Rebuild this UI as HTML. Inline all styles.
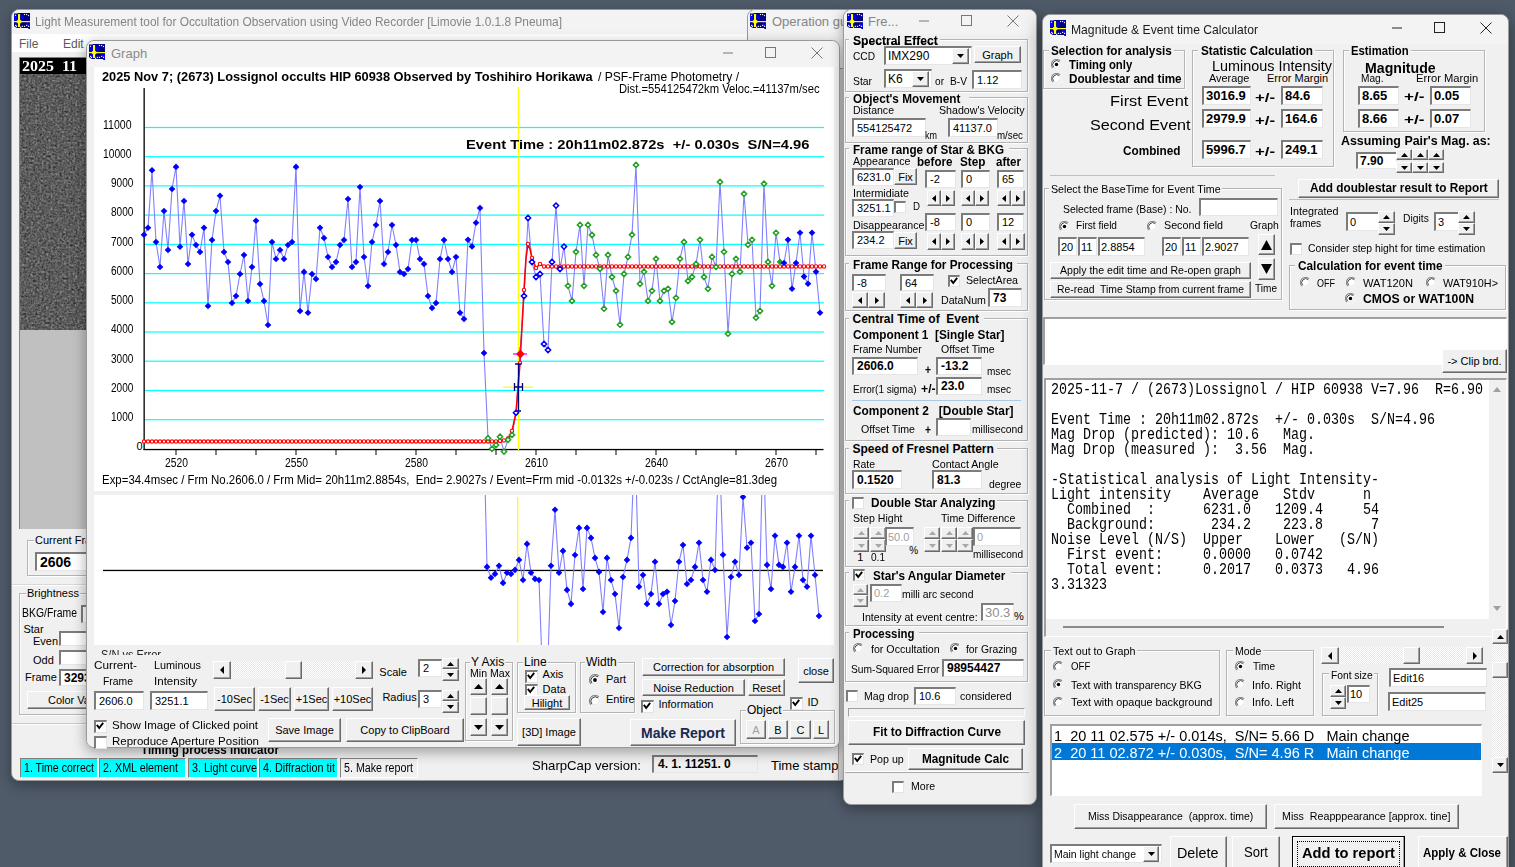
<!DOCTYPE html><html><head><meta charset="utf-8"><style>
*{margin:0;padding:0;box-sizing:content-box}
html,body{width:1515px;height:867px;overflow:hidden}
body{position:relative;background:#505b6a;font-family:"Liberation Sans",sans-serif;font-size:12px;color:#000}
.a{position:absolute}
.t{position:absolute;white-space:pre}
.win{position:absolute;background:#f0f0f0;border:1px solid #9a9a9a;border-radius:8px 8px 0 0;box-shadow:0 4px 14px rgba(0,0,0,0.35)}
.btn{position:absolute;background:#f0f0f0;border-style:solid;border-width:1px 1px 1px 1px;border-color:#fff #6a6a6a #6a6a6a #fff;box-shadow:inset -1px -1px 0 #a0a0a0;display:flex;align-items:center;justify-content:center;white-space:pre;overflow:hidden}
.ed{position:absolute;background:#fff;border-style:solid;border-width:2px 1px 1px 2px;border-color:#7c7c7c #e6e6e6 #e6e6e6 #7c7c7c;white-space:pre;overflow:hidden}
.btn svg{display:block}
.grp{position:absolute;border:1px solid #b4b4b4;box-shadow:inset 1px 1px 0 #fff, 1px 1px 0 #fff}
.glab{background:#f0f0f0;padding:0 1px}
.chk{position:absolute;background:#fff;border-style:solid;border-width:2px 1px 1px 2px;border-color:#7c7c7c #e3e3e3 #e3e3e3 #7c7c7c}
</style></head><body>
<div class="win" style="left:11px;top:9px;width:834px;height:770px;border-radius:8px"></div>
<div class="a" style="left:12px;top:10px;width:834px;height:25px;background:#f3f3f3;border-radius:8px 8px 0 0"></div>
<svg class="a" style="left:14px;top:13px" width="16" height="16" viewBox="0 0 16 16"><path d="M0 0.5 H3.5 L4 0 H16 V16 H14.5 L14 15 H3 L1 14 L0 13 Z" fill="#000080"/><path d="M0 2 L3 1.5 L3.5 6 L1 8 L0 7Z M7 2 L10 3 L9 7 L7 6Z M12 10 L16 9.5 L16 16 L14 13Z M1 10 L3 10 L4 13 L1 13Z" fill="#0000ff"/><rect x="4" y="1" width="2.1" height="13" fill="#ffff00"/><rect x="0" y="8" width="16" height="1.2" fill="#ffff00"/><path d="M5 5.9 L8.5 8.6 L5 11.6 L1.9 8.6Z" fill="#ffff00"/><rect x="0.9" y="1.6999999999999997" width="1.2" height="1.2" fill="#e8e8ff"/><rect x="9.9" y="0.9" width="1.2" height="1.2" fill="#e8e8ff"/><rect x="12.0" y="0.9" width="1.2" height="1.2" fill="#e8e8ff"/><rect x="13.9" y="1.9" width="1.2" height="1.2" fill="#e8e8ff"/><rect x="1.0" y="11.9" width="1.2" height="1.2" fill="#e8e8ff"/><rect x="1.9" y="12.8" width="1.2" height="1.2" fill="#e8e8ff"/><rect x="6.0" y="13.700000000000001" width="1.2" height="1.2" fill="#e8e8ff"/><rect x="7.800000000000001" y="12.8" width="1.2" height="1.2" fill="#e8e8ff"/><rect x="9.9" y="12.8" width="1.2" height="1.2" fill="#e8e8ff"/><rect x="12.0" y="11.8" width="1.2" height="1.2" fill="#e8e8ff"/><rect x="13.9" y="12.8" width="1.2" height="1.2" fill="#e8e8ff"/></svg>
<div class="t" style="left:35px;top:15.26px;font-size:13px;line-height:13px;color:#858585;transform:scaleX(0.9142);transform-origin:0 0;">Light Measurement tool for Occultation Observation using Video Recorder [Limovie 1.0.1.8 Pneuma]</div>
<div class="a" style="left:12px;top:34px;width:834px;height:18px;background:#ffffff;"></div>
<div class="t" style="left:19px;top:37.74px;font-size:12px;line-height:12px;color:#5a5a5a;">File</div>
<div class="t" style="left:63px;top:37.74px;font-size:12px;line-height:12px;color:#5a5a5a;">Edit</div>
<div class="a" style="left:19px;top:57px;width:68px;height:471px;background:#c0c0c0;border-left:1px solid #808080;border-top:1px solid #808080"></div>
<svg class="a" style="left:20px;top:58px" width="67" height="272"><filter id="nz" x="0" y="0" width="100%" height="100%" color-interpolation-filters="sRGB"><feTurbulence type="fractalNoise" baseFrequency="0.45" numOctaves="3" seed="3"/><feColorMatrix type="matrix" values="0.33 0.33 0.33 0 0  0.33 0.33 0.33 0 0  0.33 0.33 0.33 0 0  0 0 0 0 1"/><feComponentTransfer><feFuncR type="linear" slope="0.85" intercept="-0.06"/><feFuncG type="linear" slope="0.85" intercept="-0.06"/><feFuncB type="linear" slope="0.85" intercept="-0.06"/></feComponentTransfer></filter><rect width="67" height="272" filter="url(#nz)"/></svg>
<div class="a" style="left:20px;top:58px;width:67px;height:16px;background:#000;"></div>
<div class="t" style="left:22px;top:58.8px;font-size:15px;line-height:15px;font-weight:bold;color:#fff;font-family:'Liberation Serif', serif;transform:scaleX(1.0644);transform-origin:0 0;">2025  11</div>
<div class="grp" style="left:27px;top:540px;width:68px;height:34px;"></div>
<div class="t glab" style="left:34px;top:534px;font-size:11px;line-height:13px;">Current Fra</div>
<div class="ed" style="left:35px;top:552px;width:56px;height:16px;background:#fff;font-size:14px;line-height:16px;padding-left:3px;font-weight:bold;">2606</div>
<div class="a" style="left:12px;top:584px;width:80px;height:1px;background:#d8d8d8;border-bottom:1px solid #fff"></div>
<div class="grp" style="left:19px;top:593px;width:78px;height:120px;"></div>
<div class="t glab" style="left:26px;top:587px;font-size:11px;line-height:13px;">Brightness</div>
<div class="t" style="left:21.5px;top:606.84px;font-size:12px;line-height:12px;transform:scaleX(0.8683);transform-origin:0 0;">BKG/Frame</div>
<div class="ed" style="left:81px;top:605px;width:16px;height:15px;background:#fff;font-size:12px;line-height:15px;padding-left:3px;"></div>
<div class="t" style="left:23.4px;top:623.92px;font-size:11px;line-height:11px;">Star</div>
<div class="t" style="left:33px;top:636.22px;font-size:11px;line-height:11px;">Even</div>
<div class="ed" style="left:59px;top:631px;width:36px;height:12px;background:#fff;font-size:12px;line-height:12px;padding-left:3px;"></div>
<div class="t" style="left:33px;top:654.72px;font-size:11px;line-height:11px;">Odd</div>
<div class="ed" style="left:59px;top:650px;width:36px;height:12px;background:#fff;font-size:12px;line-height:12px;padding-left:3px;"></div>
<div class="t" style="left:25px;top:672.42px;font-size:11px;line-height:11px;">Frame</div>
<div class="ed" style="left:59px;top:669px;width:36px;height:14px;background:#fff;font-size:12px;line-height:14px;padding-left:3px;font-weight:bold;">3293</div>
<div class="btn" style="left:27px;top:691px;width:68px;height:16px;justify-content:flex-start;padding-left:20px;width:50px"><span style="font-size:11px;">Color Va</span></div>
<div class="a" style="left:12px;top:723px;width:834px;height:1px;background:#c8c8c8;border-bottom:1px solid #fff"></div>
<div class="t" style="left:141px;top:743.26px;font-size:13px;line-height:13px;font-weight:bold;transform:scaleX(0.8940);transform-origin:0 0;">Timing process indicator</div>
<div class="a" style="left:20px;top:758px;width:76px;height:18px;background:#00ffff;border-top:1px solid #808080;border-left:1px solid #808080;border-bottom:1px solid #fff;border-right:1px solid #fff;overflow:hidden"></div>
<div class="t" style="left:23.5px;top:762.24px;font-size:12px;line-height:12px;transform:scaleX(0.8821);transform-origin:0 0;">1. Time correct</div>
<div class="a" style="left:99px;top:758px;width:85px;height:18px;background:#00ffff;border-top:1px solid #808080;border-left:1px solid #808080;border-bottom:1px solid #fff;border-right:1px solid #fff;overflow:hidden"></div>
<div class="t" style="left:102.5px;top:762.24px;font-size:12px;line-height:12px;transform:scaleX(0.8972);transform-origin:0 0;">2. XML element</div>
<div class="a" style="left:188px;top:758px;width:68px;height:18px;background:#00ffff;border-top:1px solid #808080;border-left:1px solid #808080;border-bottom:1px solid #fff;border-right:1px solid #fff;overflow:hidden"></div>
<div class="t" style="left:191.5px;top:762.24px;font-size:12px;line-height:12px;transform:scaleX(0.9023);transform-origin:0 0;">3. Light curve</div>
<div class="a" style="left:259px;top:758px;width:77px;height:18px;background:#00ffff;border-top:1px solid #808080;border-left:1px solid #808080;border-bottom:1px solid #fff;border-right:1px solid #fff;overflow:hidden"></div>
<div class="t" style="left:262.5px;top:762.24px;font-size:12px;line-height:12px;transform:scaleX(0.9021);transform-origin:0 0;">4. Diffraction tit</div>
<div class="a" style="left:340px;top:758px;width:76px;height:18px;background:#f0f0f0;border-top:1px solid #808080;border-left:1px solid #808080;border-bottom:1px solid #fff;border-right:1px solid #fff;overflow:hidden"></div>
<div class="t" style="left:343.5px;top:762.24px;font-size:12px;line-height:12px;transform:scaleX(0.8919);transform-origin:0 0;">5. Make report</div>
<div class="t" style="left:531.5px;top:758.66px;font-size:13px;line-height:13px;transform:scaleX(1.0123);transform-origin:0 0;">SharpCap version:</div>
<div class="ed" style="left:652px;top:755px;width:99px;height:15px;background:#f0f0f0;font-size:12px;line-height:15px;padding-left:4px;font-weight:bold;">4. 1. 11251. 0</div>
<div class="t" style="left:771px;top:758.76px;font-size:13px;line-height:13px;">Time stamp</div>
<div class="a" style="left:838px;top:40px;width:6px;height:740px;background:#d9d9d9;border-left:1px solid #a8a8a8"></div>
<div class="win" style="left:747px;top:9px;width:108px;height:58px;box-shadow:none"></div>
<div class="a" style="left:748px;top:10px;width:108px;height:30px;background:#f3f3f3;border-radius:8px 8px 0 0"></div>
<svg class="a" style="left:750px;top:13px" width="16" height="16" viewBox="0 0 16 16"><path d="M0 0.5 H3.5 L4 0 H16 V16 H14.5 L14 15 H3 L1 14 L0 13 Z" fill="#000080"/><path d="M0 2 L3 1.5 L3.5 6 L1 8 L0 7Z M7 2 L10 3 L9 7 L7 6Z M12 10 L16 9.5 L16 16 L14 13Z M1 10 L3 10 L4 13 L1 13Z" fill="#0000ff"/><rect x="4" y="1" width="2.1" height="13" fill="#ffff00"/><rect x="0" y="8" width="16" height="1.2" fill="#ffff00"/><path d="M5 5.9 L8.5 8.6 L5 11.6 L1.9 8.6Z" fill="#ffff00"/><rect x="0.9" y="1.6999999999999997" width="1.2" height="1.2" fill="#e8e8ff"/><rect x="9.9" y="0.9" width="1.2" height="1.2" fill="#e8e8ff"/><rect x="12.0" y="0.9" width="1.2" height="1.2" fill="#e8e8ff"/><rect x="13.9" y="1.9" width="1.2" height="1.2" fill="#e8e8ff"/><rect x="1.0" y="11.9" width="1.2" height="1.2" fill="#e8e8ff"/><rect x="1.9" y="12.8" width="1.2" height="1.2" fill="#e8e8ff"/><rect x="6.0" y="13.700000000000001" width="1.2" height="1.2" fill="#e8e8ff"/><rect x="7.800000000000001" y="12.8" width="1.2" height="1.2" fill="#e8e8ff"/><rect x="9.9" y="12.8" width="1.2" height="1.2" fill="#e8e8ff"/><rect x="12.0" y="11.8" width="1.2" height="1.2" fill="#e8e8ff"/><rect x="13.9" y="12.8" width="1.2" height="1.2" fill="#e8e8ff"/></svg>
<div class="t" style="left:772px;top:15.26px;font-size:13px;line-height:13px;color:#858585;">Operation gui</div>
<div class="win" style="left:86px;top:40px;width:752px;height:706px;border-radius:8px"></div>
<div class="a" style="left:87px;top:41px;width:752px;height:26px;background:#f3f3f3;border-radius:8px 8px 0 0"></div>
<svg class="a" style="left:89px;top:44px" width="16" height="16" viewBox="0 0 16 16"><path d="M0 0.5 H3.5 L4 0 H16 V16 H14.5 L14 15 H3 L1 14 L0 13 Z" fill="#000080"/><path d="M0 2 L3 1.5 L3.5 6 L1 8 L0 7Z M7 2 L10 3 L9 7 L7 6Z M12 10 L16 9.5 L16 16 L14 13Z M1 10 L3 10 L4 13 L1 13Z" fill="#0000ff"/><rect x="4" y="1" width="2.1" height="13" fill="#ffff00"/><rect x="0" y="8" width="16" height="1.2" fill="#ffff00"/><path d="M5 5.9 L8.5 8.6 L5 11.6 L1.9 8.6Z" fill="#ffff00"/><rect x="0.9" y="1.6999999999999997" width="1.2" height="1.2" fill="#e8e8ff"/><rect x="9.9" y="0.9" width="1.2" height="1.2" fill="#e8e8ff"/><rect x="12.0" y="0.9" width="1.2" height="1.2" fill="#e8e8ff"/><rect x="13.9" y="1.9" width="1.2" height="1.2" fill="#e8e8ff"/><rect x="1.0" y="11.9" width="1.2" height="1.2" fill="#e8e8ff"/><rect x="1.9" y="12.8" width="1.2" height="1.2" fill="#e8e8ff"/><rect x="6.0" y="13.700000000000001" width="1.2" height="1.2" fill="#e8e8ff"/><rect x="7.800000000000001" y="12.8" width="1.2" height="1.2" fill="#e8e8ff"/><rect x="9.9" y="12.8" width="1.2" height="1.2" fill="#e8e8ff"/><rect x="12.0" y="11.8" width="1.2" height="1.2" fill="#e8e8ff"/><rect x="13.9" y="12.8" width="1.2" height="1.2" fill="#e8e8ff"/></svg>
<div class="t" style="left:111px;top:46.76px;font-size:13px;line-height:13px;color:#8a8a8a;">Graph</div>
<svg class="a" style="left:717px;top:45px" width="110" height="16" viewBox="0 0 110 16"><path d="M6 8 H16" stroke="#777" stroke-width="1"/><rect x="48.5" y="2.5" width="10" height="10" fill="none" stroke="#777" stroke-width="1"/><path d="M94.5 2.5 L105.5 13.5 M105.5 2.5 L94.5 13.5" stroke="#777" stroke-width="1"/></svg>
<div class="a" style="left:94px;top:67px;width:740px;height:424px;background:#fff;"></div>
<div class="a" style="left:94px;top:495px;width:740px;height:150px;background:#fff;"></div>
<svg class="a" style="left:0;top:0" width="1515" height="867" viewBox="0 0 1515 867">
<defs><clipPath id="cu"><rect x="94" y="67" width="740" height="424"/></clipPath><clipPath id="cl"><rect x="94" y="495" width="740" height="150"/></clipPath></defs>
<rect x="145" y="419.1" width="679" height="1.2" fill="#00ffff"/>
<rect x="145" y="389.9" width="679" height="1.2" fill="#00ffff"/>
<rect x="145" y="360.6" width="679" height="1.2" fill="#00ffff"/>
<rect x="145" y="331.4" width="679" height="1.2" fill="#00ffff"/>
<rect x="145" y="302.2" width="679" height="1.2" fill="#00ffff"/>
<rect x="145" y="273.0" width="679" height="1.2" fill="#00ffff"/>
<rect x="145" y="243.8" width="679" height="1.2" fill="#00ffff"/>
<rect x="145" y="214.5" width="679" height="1.2" fill="#00ffff"/>
<rect x="145" y="185.3" width="679" height="1.2" fill="#00ffff"/>
<rect x="145" y="156.1" width="679" height="1.2" fill="#00ffff"/>
<rect x="145" y="126.9" width="679" height="1.2" fill="#00ffff"/>
<rect x="143.5" y="88" width="1.3" height="362" fill="#000"/>
<rect x="143.5" y="448.9" width="680" height="1.3" fill="#000"/>
<rect x="175.5" y="449" width="1" height="6" fill="#000"/>
<rect x="215.5" y="449" width="1" height="6" fill="#000"/>
<rect x="255.5" y="449" width="1" height="6" fill="#000"/>
<rect x="295.5" y="449" width="1" height="6" fill="#000"/>
<rect x="335.5" y="449" width="1" height="6" fill="#000"/>
<rect x="375.5" y="449" width="1" height="6" fill="#000"/>
<rect x="415.5" y="449" width="1" height="6" fill="#000"/>
<rect x="455.5" y="449" width="1" height="6" fill="#000"/>
<rect x="495.5" y="449" width="1" height="6" fill="#000"/>
<rect x="535.5" y="449" width="1" height="6" fill="#000"/>
<rect x="575.5" y="449" width="1" height="6" fill="#000"/>
<rect x="615.5" y="449" width="1" height="6" fill="#000"/>
<rect x="655.5" y="449" width="1" height="6" fill="#000"/>
<rect x="695.5" y="449" width="1" height="6" fill="#000"/>
<rect x="735.5" y="449" width="1" height="6" fill="#000"/>
<rect x="775.5" y="449" width="1" height="6" fill="#000"/>
<rect x="815.5" y="449" width="1" height="6" fill="#000"/>
<rect x="517.8" y="87" width="1.3" height="363" fill="#ffff00"/>
<polyline points="144,234.8 148,227.8 152,170.2 156,242 160,267 164,211 168,250 172,189 176,166.9 180,246.7 184,201 188,264 192,234.8 196,245 200,252 204,227.8 208,306 212,240 216,211 220,195.8 224,252 228,262 232,303 236,296 240,274 244,255 248,301 252,267 256,220.8 260,284 264,301 268,325 272,242 276,259 280,250 284,259 288,245 292,242 296,166.9 300,311 304,271.9 308,312.8 312,274 316,279 320,227.8 324,238 328,257 332,267 336,262 340,245 344,240 348,199 352,267 356,262 360,187 364,257 368,286 372,242 376,225 380,201 384,264 388,252 392,225 396,245 400,272 404,274 408,269 412,240 416,240 420,259 424,264 428,296 432,308 436,303 440,259 444,240 448,259 452,272 456,257 460,312.7 464,319 468,239.8 472,246.4 476,222.7 480,208 484,353 488,438.2 492,448.8 496,445 500,436.7 504,451.6 508,439.8 512,434.9 516,412.8 520,354 524,296 528,218 532,262 536,277 540,274 544,344 548,350 552,262 556,205.6 560,269 564,246.6 568,285.8 572,300.9 576,251.8 580,224.9 584,285.8 588,224.9 592,235 596,254.9 600,268.9 604,308.7 608,254.9 612,277 616,290.8 620,324.7 624,274 628,256.9 632,234.7 636,164.9 640,283.8 644,271.7 648,300.9 652,290.8 656,258.8 660,300.9 664,290.8 668,288.8 672,321.9 676,297.8 680,258.8 684,242 688,281 692,277 696,263.9 700,239.8 704,277 708,288.8 712,256.9 716,266.9 720,182 724,251.8 728,333.7 732,274 736,258.8 740,271.7 744,193.8 748,244.8 752,239.8 756,317.7 760,311 764,183.7 768,261.9 772,285.8 776,232.8 780,261.9 784,263 788,239.8 792,288.8 796,263 800,232.8 804,276.6 808,283.8 812,232.8 816,271.7 820,312.7" fill="none" stroke="#8080ff" stroke-width="1.1" clip-path="url(#cu)"/>
<g clip-path="url(#cu)"><polyline points="144,441.6 145,441.6 146,441.6 147,441.6 148,441.6 149,441.6 150,441.6 151,441.6 152,441.6 153,441.6 154,441.6 155,441.6 156,441.6 157,441.6 158,441.6 159,441.6 160,441.6 161,441.6 162,441.6 163,441.6 164,441.6 165,441.6 166,441.6 167,441.6 168,441.6 169,441.6 170,441.6 171,441.6 172,441.6 173,441.6 174,441.6 175,441.6 176,441.6 177,441.6 178,441.6 179,441.6 180,441.6 181,441.6 182,441.6 183,441.6 184,441.6 185,441.6 186,441.6 187,441.6 188,441.6 189,441.6 190,441.6 191,441.6 192,441.6 193,441.6 194,441.6 195,441.6 196,441.6 197,441.6 198,441.6 199,441.6 200,441.6 201,441.6 202,441.6 203,441.6 204,441.6 205,441.6 206,441.6 207,441.6 208,441.6 209,441.6 210,441.6 211,441.6 212,441.6 213,441.6 214,441.6 215,441.6 216,441.6 217,441.6 218,441.6 219,441.6 220,441.6 221,441.6 222,441.6 223,441.6 224,441.6 225,441.6 226,441.6 227,441.6 228,441.6 229,441.6 230,441.6 231,441.6 232,441.6 233,441.5 234,441.5 235,441.5 236,441.5 237,441.5 238,441.5 239,441.5 240,441.5 241,441.5 242,441.5 243,441.5 244,441.5 245,441.5 246,441.5 247,441.5 248,441.5 249,441.5 250,441.5 251,441.5 252,441.5 253,441.5 254,441.5 255,441.5 256,441.5 257,441.5 258,441.5 259,441.5 260,441.5 261,441.5 262,441.5 263,441.5 264,441.5 265,441.5 266,441.5 267,441.5 268,441.5 269,441.5 270,441.5 271,441.5 272,441.5 273,441.5 274,441.5 275,441.5 276,441.5 277,441.5 278,441.5 279,441.5 280,441.5 281,441.5 282,441.5 283,441.5 284,441.5 285,441.5 286,441.5 287,441.5 288,441.5 289,441.5 290,441.5 291,441.5 292,441.5 293,441.5 294,441.5 295,441.5 296,441.5 297,441.5 298,441.5 299,441.5 300,441.5 301,441.5 302,441.5 303,441.5 304,441.5 305,441.5 306,441.5 307,441.5 308,441.5 309,441.5 310,441.5 311,441.5 312,441.5 313,441.5 314,441.5 315,441.5 316,441.5 317,441.5 318,441.5 319,441.5 320,441.5 321,441.5 322,441.5 323,441.5 324,441.5 325,441.5 326,441.5 327,441.5 328,441.5 329,441.5 330,441.5 331,441.5 332,441.5 333,441.5 334,441.5 335,441.5 336,441.5 337,441.5 338,441.5 339,441.5 340,441.5 341,441.5 342,441.5 343,441.5 344,441.5 345,441.5 346,441.5 347,441.5 348,441.5 349,441.5 350,441.5 351,441.5 352,441.5 353,441.5 354,441.5 355,441.5 356,441.5 357,441.5 358,441.5 359,441.5 360,441.5 361,441.5 362,441.5 363,441.5 364,441.5 365,441.5 366,441.5 367,441.5 368,441.5 369,441.5 370,441.5 371,441.5 372,441.5 373,441.5 374,441.5 375,441.5 376,441.5 377,441.5 378,441.5 379,441.5 380,441.5 381,441.5 382,441.5 383,441.5 384,441.5 385,441.5 386,441.5 387,441.5 388,441.5 389,441.5 390,441.5 391,441.5 392,441.5 393,441.5 394,441.5 395,441.5 396,441.5 397,441.5 398,441.5 399,441.5 400,441.5 401,441.5 402,441.5 403,441.5 404,441.5 405,441.5 406,441.5 407,441.5 408,441.4 409,441.4 410,441.4 411,441.4 412,441.4 413,441.4 414,441.4 415,441.4 416,441.4 417,441.4 418,441.4 419,441.4 420,441.4 421,441.4 422,441.4 423,441.4 424,441.4 425,441.4 426,441.4 427,441.4 428,441.4 429,441.4 430,441.4 431,441.4 432,441.4 433,441.4 434,441.4 435,441.4 436,441.4 437,441.4 438,441.4 439,441.4 440,441.4 441,441.4 442,441.4 443,441.4 444,441.4 445,441.4 446,441.4 447,441.4 448,441.4 449,441.4 450,441.4 451,441.4 452,441.4 453,441.4 454,441.4 455,441.4 456,441.4 457,441.4 458,441.4 459,441.4 460,441.4 461,441.4 462,441.4 463,441.4 464,441.4 465,441.4 466,441.4 467,441.4 468,441.4 469,441.4 470,441.4 471,441.4 472,441.4 473,441.4 474,441.4 475,441.4 476,441.4 477,441.4 478,441.4 479,441.4 480,441.4 481,441.4 482,441.4 483,441.4 484,441.4 485,441.4 486,441.4 487,441.4 488,441.4 489,441.4 490,441.4 491,441.4 492,441.4 493,441.4 494,441.4 495,441.4 496,441.4 497,441.3 498,441.2 499,441.1 500,440.9 501,440.8 502,440.7 503,440.6 504,440.5 505,440.0 506,439.5 507,439.0 508,438.5 509,436.6 510,434.8 511,432.9 512,431.0 513,426.5 514,422.0 515,417.5 516,413.0 517,400.5 518,388.0 519,375.5 520,363.0 521,344.8 522,326.5 523,308.2 524,290.0 525,274.0 526,258.0 527,251.0 528,244.0 529,246.5 530,249.0 531,253.5 532,258.0 533,260.5 534,263.0 535,265.5 536,268.0 537,267.0 538,266.0 539,265.0 540,264.0 541,264.6 542,265.2 543,265.9 544,266.5 545,266.5 546,266.5 547,266.5 548,266.5 549,266.5 550,266.5 551,266.5 552,266.5 553,266.5 554,266.5 555,266.5 556,266.5 557,266.5 558,266.5 559,266.5 560,266.5 561,266.5 562,266.5 563,266.5 564,266.5 565,266.5 566,266.5 567,266.5 568,266.5 569,266.5 570,266.5 571,266.5 572,266.5 573,266.5 574,266.5 575,266.5 576,266.5 577,266.5 578,266.5 579,266.5 580,266.5 581,266.5 582,266.5 583,266.5 584,266.5 585,266.5 586,266.5 587,266.5 588,266.5 589,266.5 590,266.5 591,266.5 592,266.5 593,266.5 594,266.5 595,266.5 596,266.5 597,266.5 598,266.5 599,266.5 600,266.5 601,266.5 602,266.5 603,266.5 604,266.5 605,266.5 606,266.5 607,266.5 608,266.5 609,266.5 610,266.5 611,266.5 612,266.5 613,266.5 614,266.5 615,266.5 616,266.5 617,266.5 618,266.5 619,266.5 620,266.5 621,266.5 622,266.5 623,266.5 624,266.5 625,266.5 626,266.5 627,266.5 628,266.5 629,266.5 630,266.5 631,266.5 632,266.5 633,266.5 634,266.5 635,266.5 636,266.5 637,266.5 638,266.5 639,266.5 640,266.5 641,266.5 642,266.5 643,266.5 644,266.5 645,266.5 646,266.5 647,266.5 648,266.5 649,266.5 650,266.5 651,266.5 652,266.5 653,266.5 654,266.5 655,266.5 656,266.5 657,266.5 658,266.5 659,266.5 660,266.5 661,266.5 662,266.5 663,266.5 664,266.5 665,266.5 666,266.5 667,266.5 668,266.5 669,266.5 670,266.5 671,266.5 672,266.5 673,266.5 674,266.5 675,266.5 676,266.5 677,266.5 678,266.5 679,266.5 680,266.5 681,266.5 682,266.5 683,266.5 684,266.5 685,266.5 686,266.5 687,266.5 688,266.5 689,266.5 690,266.5 691,266.5 692,266.5 693,266.5 694,266.5 695,266.5 696,266.5 697,266.5 698,266.5 699,266.5 700,266.5 701,266.5 702,266.5 703,266.5 704,266.5 705,266.5 706,266.5 707,266.5 708,266.5 709,266.5 710,266.5 711,266.5 712,266.5 713,266.5 714,266.5 715,266.5 716,266.5 717,266.5 718,266.5 719,266.5 720,266.5 721,266.5 722,266.5 723,266.5 724,266.5 725,266.5 726,266.5 727,266.5 728,266.5 729,266.5 730,266.5 731,266.5 732,266.5 733,266.5 734,266.5 735,266.5 736,266.5 737,266.5 738,266.5 739,266.5 740,266.5 741,266.5 742,266.5 743,266.5 744,266.5 745,266.5 746,266.5 747,266.5 748,266.5 749,266.5 750,266.5 751,266.5 752,266.5 753,266.5 754,266.5 755,266.5 756,266.5 757,266.5 758,266.5 759,266.5 760,266.5 761,266.5 762,266.5 763,266.5 764,266.5 765,266.5 766,266.5 767,266.5 768,266.5 769,266.5 770,266.5 771,266.5 772,266.5 773,266.5 774,266.5 775,266.5 776,266.5 777,266.5 778,266.5 779,266.5 780,266.5 781,266.5 782,266.5 783,266.5 784,266.5 785,266.5 786,266.5 787,266.5 788,266.5 789,266.5 790,266.5 791,266.5 792,266.5 793,266.5 794,266.5 795,266.5 796,266.5 797,266.5 798,266.5 799,266.5 800,266.5 801,266.5 802,266.5 803,266.5 804,266.5 805,266.5 806,266.5 807,266.5 808,266.5 809,266.5 810,266.5 811,266.5 812,266.5 813,266.5 814,266.5 815,266.5 816,266.5 817,266.5 818,266.5 819,266.5 820,266.5 821,266.5 822,266.5 823,266.5 824,266.5" fill="none" stroke="#ff0000" stroke-width="1.6"/>
<circle cx="144" cy="441.6" r="1.7" fill="#fff" stroke="#ff0000" stroke-width="1.1"/>
<circle cx="148" cy="441.6" r="1.7" fill="#fff" stroke="#ff0000" stroke-width="1.1"/>
<circle cx="152" cy="441.6" r="1.7" fill="#fff" stroke="#ff0000" stroke-width="1.1"/>
<circle cx="156" cy="441.6" r="1.7" fill="#fff" stroke="#ff0000" stroke-width="1.1"/>
<circle cx="160" cy="441.6" r="1.7" fill="#fff" stroke="#ff0000" stroke-width="1.1"/>
<circle cx="164" cy="441.6" r="1.7" fill="#fff" stroke="#ff0000" stroke-width="1.1"/>
<circle cx="168" cy="441.6" r="1.7" fill="#fff" stroke="#ff0000" stroke-width="1.1"/>
<circle cx="172" cy="441.6" r="1.7" fill="#fff" stroke="#ff0000" stroke-width="1.1"/>
<circle cx="176" cy="441.6" r="1.7" fill="#fff" stroke="#ff0000" stroke-width="1.1"/>
<circle cx="180" cy="441.6" r="1.7" fill="#fff" stroke="#ff0000" stroke-width="1.1"/>
<circle cx="184" cy="441.6" r="1.7" fill="#fff" stroke="#ff0000" stroke-width="1.1"/>
<circle cx="188" cy="441.6" r="1.7" fill="#fff" stroke="#ff0000" stroke-width="1.1"/>
<circle cx="192" cy="441.6" r="1.7" fill="#fff" stroke="#ff0000" stroke-width="1.1"/>
<circle cx="196" cy="441.6" r="1.7" fill="#fff" stroke="#ff0000" stroke-width="1.1"/>
<circle cx="200" cy="441.6" r="1.7" fill="#fff" stroke="#ff0000" stroke-width="1.1"/>
<circle cx="204" cy="441.6" r="1.7" fill="#fff" stroke="#ff0000" stroke-width="1.1"/>
<circle cx="208" cy="441.6" r="1.7" fill="#fff" stroke="#ff0000" stroke-width="1.1"/>
<circle cx="212" cy="441.6" r="1.7" fill="#fff" stroke="#ff0000" stroke-width="1.1"/>
<circle cx="216" cy="441.6" r="1.7" fill="#fff" stroke="#ff0000" stroke-width="1.1"/>
<circle cx="220" cy="441.6" r="1.7" fill="#fff" stroke="#ff0000" stroke-width="1.1"/>
<circle cx="224" cy="441.6" r="1.7" fill="#fff" stroke="#ff0000" stroke-width="1.1"/>
<circle cx="228" cy="441.6" r="1.7" fill="#fff" stroke="#ff0000" stroke-width="1.1"/>
<circle cx="232" cy="441.6" r="1.7" fill="#fff" stroke="#ff0000" stroke-width="1.1"/>
<circle cx="236" cy="441.5" r="1.7" fill="#fff" stroke="#ff0000" stroke-width="1.1"/>
<circle cx="240" cy="441.5" r="1.7" fill="#fff" stroke="#ff0000" stroke-width="1.1"/>
<circle cx="244" cy="441.5" r="1.7" fill="#fff" stroke="#ff0000" stroke-width="1.1"/>
<circle cx="248" cy="441.5" r="1.7" fill="#fff" stroke="#ff0000" stroke-width="1.1"/>
<circle cx="252" cy="441.5" r="1.7" fill="#fff" stroke="#ff0000" stroke-width="1.1"/>
<circle cx="256" cy="441.5" r="1.7" fill="#fff" stroke="#ff0000" stroke-width="1.1"/>
<circle cx="260" cy="441.5" r="1.7" fill="#fff" stroke="#ff0000" stroke-width="1.1"/>
<circle cx="264" cy="441.5" r="1.7" fill="#fff" stroke="#ff0000" stroke-width="1.1"/>
<circle cx="268" cy="441.5" r="1.7" fill="#fff" stroke="#ff0000" stroke-width="1.1"/>
<circle cx="272" cy="441.5" r="1.7" fill="#fff" stroke="#ff0000" stroke-width="1.1"/>
<circle cx="276" cy="441.5" r="1.7" fill="#fff" stroke="#ff0000" stroke-width="1.1"/>
<circle cx="280" cy="441.5" r="1.7" fill="#fff" stroke="#ff0000" stroke-width="1.1"/>
<circle cx="284" cy="441.5" r="1.7" fill="#fff" stroke="#ff0000" stroke-width="1.1"/>
<circle cx="288" cy="441.5" r="1.7" fill="#fff" stroke="#ff0000" stroke-width="1.1"/>
<circle cx="292" cy="441.5" r="1.7" fill="#fff" stroke="#ff0000" stroke-width="1.1"/>
<circle cx="296" cy="441.5" r="1.7" fill="#fff" stroke="#ff0000" stroke-width="1.1"/>
<circle cx="300" cy="441.5" r="1.7" fill="#fff" stroke="#ff0000" stroke-width="1.1"/>
<circle cx="304" cy="441.5" r="1.7" fill="#fff" stroke="#ff0000" stroke-width="1.1"/>
<circle cx="308" cy="441.5" r="1.7" fill="#fff" stroke="#ff0000" stroke-width="1.1"/>
<circle cx="312" cy="441.5" r="1.7" fill="#fff" stroke="#ff0000" stroke-width="1.1"/>
<circle cx="316" cy="441.5" r="1.7" fill="#fff" stroke="#ff0000" stroke-width="1.1"/>
<circle cx="320" cy="441.5" r="1.7" fill="#fff" stroke="#ff0000" stroke-width="1.1"/>
<circle cx="324" cy="441.5" r="1.7" fill="#fff" stroke="#ff0000" stroke-width="1.1"/>
<circle cx="328" cy="441.5" r="1.7" fill="#fff" stroke="#ff0000" stroke-width="1.1"/>
<circle cx="332" cy="441.5" r="1.7" fill="#fff" stroke="#ff0000" stroke-width="1.1"/>
<circle cx="336" cy="441.5" r="1.7" fill="#fff" stroke="#ff0000" stroke-width="1.1"/>
<circle cx="340" cy="441.5" r="1.7" fill="#fff" stroke="#ff0000" stroke-width="1.1"/>
<circle cx="344" cy="441.5" r="1.7" fill="#fff" stroke="#ff0000" stroke-width="1.1"/>
<circle cx="348" cy="441.5" r="1.7" fill="#fff" stroke="#ff0000" stroke-width="1.1"/>
<circle cx="352" cy="441.5" r="1.7" fill="#fff" stroke="#ff0000" stroke-width="1.1"/>
<circle cx="356" cy="441.5" r="1.7" fill="#fff" stroke="#ff0000" stroke-width="1.1"/>
<circle cx="360" cy="441.5" r="1.7" fill="#fff" stroke="#ff0000" stroke-width="1.1"/>
<circle cx="364" cy="441.5" r="1.7" fill="#fff" stroke="#ff0000" stroke-width="1.1"/>
<circle cx="368" cy="441.5" r="1.7" fill="#fff" stroke="#ff0000" stroke-width="1.1"/>
<circle cx="372" cy="441.5" r="1.7" fill="#fff" stroke="#ff0000" stroke-width="1.1"/>
<circle cx="376" cy="441.5" r="1.7" fill="#fff" stroke="#ff0000" stroke-width="1.1"/>
<circle cx="380" cy="441.5" r="1.7" fill="#fff" stroke="#ff0000" stroke-width="1.1"/>
<circle cx="384" cy="441.5" r="1.7" fill="#fff" stroke="#ff0000" stroke-width="1.1"/>
<circle cx="388" cy="441.5" r="1.7" fill="#fff" stroke="#ff0000" stroke-width="1.1"/>
<circle cx="392" cy="441.5" r="1.7" fill="#fff" stroke="#ff0000" stroke-width="1.1"/>
<circle cx="396" cy="441.5" r="1.7" fill="#fff" stroke="#ff0000" stroke-width="1.1"/>
<circle cx="400" cy="441.5" r="1.7" fill="#fff" stroke="#ff0000" stroke-width="1.1"/>
<circle cx="404" cy="441.5" r="1.7" fill="#fff" stroke="#ff0000" stroke-width="1.1"/>
<circle cx="408" cy="441.4" r="1.7" fill="#fff" stroke="#ff0000" stroke-width="1.1"/>
<circle cx="412" cy="441.4" r="1.7" fill="#fff" stroke="#ff0000" stroke-width="1.1"/>
<circle cx="416" cy="441.4" r="1.7" fill="#fff" stroke="#ff0000" stroke-width="1.1"/>
<circle cx="420" cy="441.4" r="1.7" fill="#fff" stroke="#ff0000" stroke-width="1.1"/>
<circle cx="424" cy="441.4" r="1.7" fill="#fff" stroke="#ff0000" stroke-width="1.1"/>
<circle cx="428" cy="441.4" r="1.7" fill="#fff" stroke="#ff0000" stroke-width="1.1"/>
<circle cx="432" cy="441.4" r="1.7" fill="#fff" stroke="#ff0000" stroke-width="1.1"/>
<circle cx="436" cy="441.4" r="1.7" fill="#fff" stroke="#ff0000" stroke-width="1.1"/>
<circle cx="440" cy="441.4" r="1.7" fill="#fff" stroke="#ff0000" stroke-width="1.1"/>
<circle cx="444" cy="441.4" r="1.7" fill="#fff" stroke="#ff0000" stroke-width="1.1"/>
<circle cx="448" cy="441.4" r="1.7" fill="#fff" stroke="#ff0000" stroke-width="1.1"/>
<circle cx="452" cy="441.4" r="1.7" fill="#fff" stroke="#ff0000" stroke-width="1.1"/>
<circle cx="456" cy="441.4" r="1.7" fill="#fff" stroke="#ff0000" stroke-width="1.1"/>
<circle cx="460" cy="441.4" r="1.7" fill="#fff" stroke="#ff0000" stroke-width="1.1"/>
<circle cx="464" cy="441.4" r="1.7" fill="#fff" stroke="#ff0000" stroke-width="1.1"/>
<circle cx="468" cy="441.4" r="1.7" fill="#fff" stroke="#ff0000" stroke-width="1.1"/>
<circle cx="472" cy="441.4" r="1.7" fill="#fff" stroke="#ff0000" stroke-width="1.1"/>
<circle cx="476" cy="441.4" r="1.7" fill="#fff" stroke="#ff0000" stroke-width="1.1"/>
<circle cx="480" cy="441.4" r="1.7" fill="#fff" stroke="#ff0000" stroke-width="1.1"/>
<circle cx="484" cy="441.4" r="1.7" fill="#fff" stroke="#ff0000" stroke-width="1.1"/>
<circle cx="488" cy="441.4" r="1.7" fill="#fff" stroke="#ff0000" stroke-width="1.1"/>
<circle cx="492" cy="441.4" r="1.7" fill="#fff" stroke="#ff0000" stroke-width="1.1"/>
<circle cx="496" cy="441.4" r="1.7" fill="#fff" stroke="#ff0000" stroke-width="1.1"/>
<circle cx="500" cy="440.9" r="1.7" fill="#fff" stroke="#ff0000" stroke-width="1.1"/>
<circle cx="504" cy="440.5" r="1.7" fill="#fff" stroke="#ff0000" stroke-width="1.1"/>
<circle cx="508" cy="438.5" r="1.7" fill="#fff" stroke="#ff0000" stroke-width="1.1"/>
<circle cx="512" cy="431.0" r="1.7" fill="#fff" stroke="#ff0000" stroke-width="1.1"/>
<circle cx="516" cy="413.0" r="1.7" fill="#fff" stroke="#ff0000" stroke-width="1.1"/>
<circle cx="520" cy="363.0" r="1.7" fill="#fff" stroke="#ff0000" stroke-width="1.1"/>
<circle cx="524" cy="290.0" r="1.7" fill="#fff" stroke="#ff0000" stroke-width="1.1"/>
<circle cx="528" cy="244.0" r="1.7" fill="#fff" stroke="#ff0000" stroke-width="1.1"/>
<circle cx="532" cy="258.0" r="1.7" fill="#fff" stroke="#ff0000" stroke-width="1.1"/>
<circle cx="536" cy="268.0" r="1.7" fill="#fff" stroke="#ff0000" stroke-width="1.1"/>
<circle cx="540" cy="264.0" r="1.7" fill="#fff" stroke="#ff0000" stroke-width="1.1"/>
<circle cx="544" cy="266.5" r="1.7" fill="#fff" stroke="#ff0000" stroke-width="1.1"/>
<circle cx="548" cy="266.5" r="1.7" fill="#fff" stroke="#ff0000" stroke-width="1.1"/>
<circle cx="552" cy="266.5" r="1.7" fill="#fff" stroke="#ff0000" stroke-width="1.1"/>
<circle cx="556" cy="266.5" r="1.7" fill="#fff" stroke="#ff0000" stroke-width="1.1"/>
<circle cx="560" cy="266.5" r="1.7" fill="#fff" stroke="#ff0000" stroke-width="1.1"/>
<circle cx="564" cy="266.5" r="1.7" fill="#fff" stroke="#ff0000" stroke-width="1.1"/>
<circle cx="568" cy="266.5" r="1.7" fill="#fff" stroke="#ff0000" stroke-width="1.1"/>
<circle cx="572" cy="266.5" r="1.7" fill="#fff" stroke="#ff0000" stroke-width="1.1"/>
<circle cx="576" cy="266.5" r="1.7" fill="#fff" stroke="#ff0000" stroke-width="1.1"/>
<circle cx="580" cy="266.5" r="1.7" fill="#fff" stroke="#ff0000" stroke-width="1.1"/>
<circle cx="584" cy="266.5" r="1.7" fill="#fff" stroke="#ff0000" stroke-width="1.1"/>
<circle cx="588" cy="266.5" r="1.7" fill="#fff" stroke="#ff0000" stroke-width="1.1"/>
<circle cx="592" cy="266.5" r="1.7" fill="#fff" stroke="#ff0000" stroke-width="1.1"/>
<circle cx="596" cy="266.5" r="1.7" fill="#fff" stroke="#ff0000" stroke-width="1.1"/>
<circle cx="600" cy="266.5" r="1.7" fill="#fff" stroke="#ff0000" stroke-width="1.1"/>
<circle cx="604" cy="266.5" r="1.7" fill="#fff" stroke="#ff0000" stroke-width="1.1"/>
<circle cx="608" cy="266.5" r="1.7" fill="#fff" stroke="#ff0000" stroke-width="1.1"/>
<circle cx="612" cy="266.5" r="1.7" fill="#fff" stroke="#ff0000" stroke-width="1.1"/>
<circle cx="616" cy="266.5" r="1.7" fill="#fff" stroke="#ff0000" stroke-width="1.1"/>
<circle cx="620" cy="266.5" r="1.7" fill="#fff" stroke="#ff0000" stroke-width="1.1"/>
<circle cx="624" cy="266.5" r="1.7" fill="#fff" stroke="#ff0000" stroke-width="1.1"/>
<circle cx="628" cy="266.5" r="1.7" fill="#fff" stroke="#ff0000" stroke-width="1.1"/>
<circle cx="632" cy="266.5" r="1.7" fill="#fff" stroke="#ff0000" stroke-width="1.1"/>
<circle cx="636" cy="266.5" r="1.7" fill="#fff" stroke="#ff0000" stroke-width="1.1"/>
<circle cx="640" cy="266.5" r="1.7" fill="#fff" stroke="#ff0000" stroke-width="1.1"/>
<circle cx="644" cy="266.5" r="1.7" fill="#fff" stroke="#ff0000" stroke-width="1.1"/>
<circle cx="648" cy="266.5" r="1.7" fill="#fff" stroke="#ff0000" stroke-width="1.1"/>
<circle cx="652" cy="266.5" r="1.7" fill="#fff" stroke="#ff0000" stroke-width="1.1"/>
<circle cx="656" cy="266.5" r="1.7" fill="#fff" stroke="#ff0000" stroke-width="1.1"/>
<circle cx="660" cy="266.5" r="1.7" fill="#fff" stroke="#ff0000" stroke-width="1.1"/>
<circle cx="664" cy="266.5" r="1.7" fill="#fff" stroke="#ff0000" stroke-width="1.1"/>
<circle cx="668" cy="266.5" r="1.7" fill="#fff" stroke="#ff0000" stroke-width="1.1"/>
<circle cx="672" cy="266.5" r="1.7" fill="#fff" stroke="#ff0000" stroke-width="1.1"/>
<circle cx="676" cy="266.5" r="1.7" fill="#fff" stroke="#ff0000" stroke-width="1.1"/>
<circle cx="680" cy="266.5" r="1.7" fill="#fff" stroke="#ff0000" stroke-width="1.1"/>
<circle cx="684" cy="266.5" r="1.7" fill="#fff" stroke="#ff0000" stroke-width="1.1"/>
<circle cx="688" cy="266.5" r="1.7" fill="#fff" stroke="#ff0000" stroke-width="1.1"/>
<circle cx="692" cy="266.5" r="1.7" fill="#fff" stroke="#ff0000" stroke-width="1.1"/>
<circle cx="696" cy="266.5" r="1.7" fill="#fff" stroke="#ff0000" stroke-width="1.1"/>
<circle cx="700" cy="266.5" r="1.7" fill="#fff" stroke="#ff0000" stroke-width="1.1"/>
<circle cx="704" cy="266.5" r="1.7" fill="#fff" stroke="#ff0000" stroke-width="1.1"/>
<circle cx="708" cy="266.5" r="1.7" fill="#fff" stroke="#ff0000" stroke-width="1.1"/>
<circle cx="712" cy="266.5" r="1.7" fill="#fff" stroke="#ff0000" stroke-width="1.1"/>
<circle cx="716" cy="266.5" r="1.7" fill="#fff" stroke="#ff0000" stroke-width="1.1"/>
<circle cx="720" cy="266.5" r="1.7" fill="#fff" stroke="#ff0000" stroke-width="1.1"/>
<circle cx="724" cy="266.5" r="1.7" fill="#fff" stroke="#ff0000" stroke-width="1.1"/>
<circle cx="728" cy="266.5" r="1.7" fill="#fff" stroke="#ff0000" stroke-width="1.1"/>
<circle cx="732" cy="266.5" r="1.7" fill="#fff" stroke="#ff0000" stroke-width="1.1"/>
<circle cx="736" cy="266.5" r="1.7" fill="#fff" stroke="#ff0000" stroke-width="1.1"/>
<circle cx="740" cy="266.5" r="1.7" fill="#fff" stroke="#ff0000" stroke-width="1.1"/>
<circle cx="744" cy="266.5" r="1.7" fill="#fff" stroke="#ff0000" stroke-width="1.1"/>
<circle cx="748" cy="266.5" r="1.7" fill="#fff" stroke="#ff0000" stroke-width="1.1"/>
<circle cx="752" cy="266.5" r="1.7" fill="#fff" stroke="#ff0000" stroke-width="1.1"/>
<circle cx="756" cy="266.5" r="1.7" fill="#fff" stroke="#ff0000" stroke-width="1.1"/>
<circle cx="760" cy="266.5" r="1.7" fill="#fff" stroke="#ff0000" stroke-width="1.1"/>
<circle cx="764" cy="266.5" r="1.7" fill="#fff" stroke="#ff0000" stroke-width="1.1"/>
<circle cx="768" cy="266.5" r="1.7" fill="#fff" stroke="#ff0000" stroke-width="1.1"/>
<circle cx="772" cy="266.5" r="1.7" fill="#fff" stroke="#ff0000" stroke-width="1.1"/>
<circle cx="776" cy="266.5" r="1.7" fill="#fff" stroke="#ff0000" stroke-width="1.1"/>
<circle cx="780" cy="266.5" r="1.7" fill="#fff" stroke="#ff0000" stroke-width="1.1"/>
<circle cx="784" cy="266.5" r="1.7" fill="#fff" stroke="#ff0000" stroke-width="1.1"/>
<circle cx="788" cy="266.5" r="1.7" fill="#fff" stroke="#ff0000" stroke-width="1.1"/>
<circle cx="792" cy="266.5" r="1.7" fill="#fff" stroke="#ff0000" stroke-width="1.1"/>
<circle cx="796" cy="266.5" r="1.7" fill="#fff" stroke="#ff0000" stroke-width="1.1"/>
<circle cx="800" cy="266.5" r="1.7" fill="#fff" stroke="#ff0000" stroke-width="1.1"/>
<circle cx="804" cy="266.5" r="1.7" fill="#fff" stroke="#ff0000" stroke-width="1.1"/>
<circle cx="808" cy="266.5" r="1.7" fill="#fff" stroke="#ff0000" stroke-width="1.1"/>
<circle cx="812" cy="266.5" r="1.7" fill="#fff" stroke="#ff0000" stroke-width="1.1"/>
<circle cx="816" cy="266.5" r="1.7" fill="#fff" stroke="#ff0000" stroke-width="1.1"/>
<circle cx="820" cy="266.5" r="1.7" fill="#fff" stroke="#ff0000" stroke-width="1.1"/>
<circle cx="824" cy="266.5" r="1.7" fill="#fff" stroke="#ff0000" stroke-width="1.1"/>
</g>
<rect x="503" y="386.6" width="30" height="1.3" fill="#ffff00"/>
<path d="M518.5 364 V411 M515 364 H521 M515 411 H521 M514.5 383 V391 M522.5 383 V391 M514.5 387 H522.5" stroke="#000080" stroke-width="1.3" fill="none"/>
<path d="M144 231.5 L147.3 234.8 L144 238.10000000000002 L140.7 234.8 Z" fill="#0000ff"/>
<path d="M148 224.5 L151.3 227.8 L148 231.10000000000002 L144.7 227.8 Z" fill="#0000ff"/>
<path d="M152 166.89999999999998 L155.3 170.2 L152 173.5 L148.7 170.2 Z" fill="#0000ff"/>
<path d="M156 238.7 L159.3 242 L156 245.3 L152.7 242 Z" fill="#0000ff"/>
<path d="M160 263.7 L163.3 267 L160 270.3 L156.7 267 Z" fill="#0000ff"/>
<path d="M164 207.7 L167.3 211 L164 214.3 L160.7 211 Z" fill="#0000ff"/>
<path d="M168 246.7 L171.3 250 L168 253.3 L164.7 250 Z" fill="#0000ff"/>
<path d="M172 185.7 L175.3 189 L172 192.3 L168.7 189 Z" fill="#0000ff"/>
<path d="M176 163.6 L179.3 166.9 L176 170.20000000000002 L172.7 166.9 Z" fill="#0000ff"/>
<path d="M180 243.39999999999998 L183.3 246.7 L180 250.0 L176.7 246.7 Z" fill="#0000ff"/>
<path d="M184 197.7 L187.3 201 L184 204.3 L180.7 201 Z" fill="#0000ff"/>
<path d="M188 260.7 L191.3 264 L188 267.3 L184.7 264 Z" fill="#0000ff"/>
<path d="M192 231.5 L195.3 234.8 L192 238.10000000000002 L188.7 234.8 Z" fill="#0000ff"/>
<path d="M196 241.7 L199.3 245 L196 248.3 L192.7 245 Z" fill="#0000ff"/>
<path d="M200 248.7 L203.3 252 L200 255.3 L196.7 252 Z" fill="#0000ff"/>
<path d="M204 224.5 L207.3 227.8 L204 231.10000000000002 L200.7 227.8 Z" fill="#0000ff"/>
<path d="M208 302.7 L211.3 306 L208 309.3 L204.7 306 Z" fill="#0000ff"/>
<path d="M212 236.7 L215.3 240 L212 243.3 L208.7 240 Z" fill="#0000ff"/>
<path d="M216 207.7 L219.3 211 L216 214.3 L212.7 211 Z" fill="#0000ff"/>
<path d="M220 192.5 L223.3 195.8 L220 199.10000000000002 L216.7 195.8 Z" fill="#0000ff"/>
<path d="M224 248.7 L227.3 252 L224 255.3 L220.7 252 Z" fill="#0000ff"/>
<path d="M228 258.7 L231.3 262 L228 265.3 L224.7 262 Z" fill="#0000ff"/>
<path d="M232 299.7 L235.3 303 L232 306.3 L228.7 303 Z" fill="#0000ff"/>
<path d="M236 292.7 L239.3 296 L236 299.3 L232.7 296 Z" fill="#0000ff"/>
<path d="M240 270.7 L243.3 274 L240 277.3 L236.7 274 Z" fill="#0000ff"/>
<path d="M244 251.7 L247.3 255 L244 258.3 L240.7 255 Z" fill="#0000ff"/>
<path d="M248 297.7 L251.3 301 L248 304.3 L244.7 301 Z" fill="#0000ff"/>
<path d="M252 263.7 L255.3 267 L252 270.3 L248.7 267 Z" fill="#0000ff"/>
<path d="M256 217.5 L259.3 220.8 L256 224.10000000000002 L252.7 220.8 Z" fill="#0000ff"/>
<path d="M260 280.7 L263.3 284 L260 287.3 L256.7 284 Z" fill="#0000ff"/>
<path d="M264 297.7 L267.3 301 L264 304.3 L260.7 301 Z" fill="#0000ff"/>
<path d="M268 321.7 L271.3 325 L268 328.3 L264.7 325 Z" fill="#0000ff"/>
<path d="M272 238.7 L275.3 242 L272 245.3 L268.7 242 Z" fill="#0000ff"/>
<path d="M276 255.7 L279.3 259 L276 262.3 L272.7 259 Z" fill="#0000ff"/>
<path d="M280 246.7 L283.3 250 L280 253.3 L276.7 250 Z" fill="#0000ff"/>
<path d="M284 255.7 L287.3 259 L284 262.3 L280.7 259 Z" fill="#0000ff"/>
<path d="M288 241.7 L291.3 245 L288 248.3 L284.7 245 Z" fill="#0000ff"/>
<path d="M292 238.7 L295.3 242 L292 245.3 L288.7 242 Z" fill="#0000ff"/>
<path d="M296 163.6 L299.3 166.9 L296 170.20000000000002 L292.7 166.9 Z" fill="#0000ff"/>
<path d="M300 307.7 L303.3 311 L300 314.3 L296.7 311 Z" fill="#0000ff"/>
<path d="M304 268.59999999999997 L307.3 271.9 L304 275.2 L300.7 271.9 Z" fill="#0000ff"/>
<path d="M308 309.5 L311.3 312.8 L308 316.1 L304.7 312.8 Z" fill="#0000ff"/>
<path d="M312 270.7 L315.3 274 L312 277.3 L308.7 274 Z" fill="#0000ff"/>
<path d="M316 275.7 L319.3 279 L316 282.3 L312.7 279 Z" fill="#0000ff"/>
<path d="M320 224.5 L323.3 227.8 L320 231.10000000000002 L316.7 227.8 Z" fill="#0000ff"/>
<path d="M324 234.7 L327.3 238 L324 241.3 L320.7 238 Z" fill="#0000ff"/>
<path d="M328 253.7 L331.3 257 L328 260.3 L324.7 257 Z" fill="#0000ff"/>
<path d="M332 263.7 L335.3 267 L332 270.3 L328.7 267 Z" fill="#0000ff"/>
<path d="M336 258.7 L339.3 262 L336 265.3 L332.7 262 Z" fill="#0000ff"/>
<path d="M340 241.7 L343.3 245 L340 248.3 L336.7 245 Z" fill="#0000ff"/>
<path d="M344 236.7 L347.3 240 L344 243.3 L340.7 240 Z" fill="#0000ff"/>
<path d="M348 195.7 L351.3 199 L348 202.3 L344.7 199 Z" fill="#0000ff"/>
<path d="M352 263.7 L355.3 267 L352 270.3 L348.7 267 Z" fill="#0000ff"/>
<path d="M356 258.7 L359.3 262 L356 265.3 L352.7 262 Z" fill="#0000ff"/>
<path d="M360 183.7 L363.3 187 L360 190.3 L356.7 187 Z" fill="#0000ff"/>
<path d="M364 253.7 L367.3 257 L364 260.3 L360.7 257 Z" fill="#0000ff"/>
<path d="M368 282.7 L371.3 286 L368 289.3 L364.7 286 Z" fill="#0000ff"/>
<path d="M372 238.7 L375.3 242 L372 245.3 L368.7 242 Z" fill="#0000ff"/>
<path d="M376 221.7 L379.3 225 L376 228.3 L372.7 225 Z" fill="#0000ff"/>
<path d="M380 197.7 L383.3 201 L380 204.3 L376.7 201 Z" fill="#0000ff"/>
<path d="M384 260.7 L387.3 264 L384 267.3 L380.7 264 Z" fill="#0000ff"/>
<path d="M388 248.7 L391.3 252 L388 255.3 L384.7 252 Z" fill="#0000ff"/>
<path d="M392 221.7 L395.3 225 L392 228.3 L388.7 225 Z" fill="#0000ff"/>
<path d="M396 241.7 L399.3 245 L396 248.3 L392.7 245 Z" fill="#0000ff"/>
<path d="M400 268.7 L403.3 272 L400 275.3 L396.7 272 Z" fill="#0000ff"/>
<path d="M404 270.7 L407.3 274 L404 277.3 L400.7 274 Z" fill="#0000ff"/>
<path d="M408 265.7 L411.3 269 L408 272.3 L404.7 269 Z" fill="#0000ff"/>
<path d="M412 236.7 L415.3 240 L412 243.3 L408.7 240 Z" fill="#0000ff"/>
<path d="M416 236.7 L419.3 240 L416 243.3 L412.7 240 Z" fill="#0000ff"/>
<path d="M420 255.7 L423.3 259 L420 262.3 L416.7 259 Z" fill="#0000ff"/>
<path d="M424 260.7 L427.3 264 L424 267.3 L420.7 264 Z" fill="#0000ff"/>
<path d="M428 292.7 L431.3 296 L428 299.3 L424.7 296 Z" fill="#0000ff"/>
<path d="M432 304.7 L435.3 308 L432 311.3 L428.7 308 Z" fill="#0000ff"/>
<path d="M436 299.7 L439.3 303 L436 306.3 L432.7 303 Z" fill="#0000ff"/>
<path d="M440 255.7 L443.3 259 L440 262.3 L436.7 259 Z" fill="#0000ff"/>
<path d="M444 236.7 L447.3 240 L444 243.3 L440.7 240 Z" fill="#0000ff"/>
<path d="M448 255.7 L451.3 259 L448 262.3 L444.7 259 Z" fill="#0000ff"/>
<path d="M452 268.7 L455.3 272 L452 275.3 L448.7 272 Z" fill="#0000ff"/>
<path d="M456 253.7 L459.3 257 L456 260.3 L452.7 257 Z" fill="#0000ff"/>
<path d="M460 309.4 L463.3 312.7 L460 316.0 L456.7 312.7 Z" fill="#0000ff"/>
<path d="M464 315.7 L467.3 319 L464 322.3 L460.7 319 Z" fill="#0000ff"/>
<path d="M468 236.5 L471.3 239.8 L468 243.10000000000002 L464.7 239.8 Z" fill="#0000ff"/>
<path d="M472 243.1 L475.3 246.4 L472 249.70000000000002 L468.7 246.4 Z" fill="#0000ff"/>
<path d="M476 219.39999999999998 L479.3 222.7 L476 226.0 L472.7 222.7 Z" fill="#0000ff"/>
<path d="M480 204.7 L483.3 208 L480 211.3 L476.7 208 Z" fill="#0000ff"/>
<path d="M484 349.7 L487.3 353 L484 356.3 L480.7 353 Z" fill="#0000ff"/>
<path d="M488 435.59999999999997 L490.6 438.2 L488 440.8 L485.4 438.2 Z" fill="#fff" stroke="#20a020" stroke-width="1.5"/>
<path d="M492 446.2 L494.6 448.8 L492 451.40000000000003 L489.4 448.8 Z" fill="#fff" stroke="#20a020" stroke-width="1.5"/>
<path d="M496 442.4 L498.6 445 L496 447.6 L493.4 445 Z" fill="#fff" stroke="#20a020" stroke-width="1.5"/>
<path d="M500 434.09999999999997 L502.6 436.7 L500 439.3 L497.4 436.7 Z" fill="#fff" stroke="#20a020" stroke-width="1.5"/>
<path d="M504 449.0 L506.6 451.6 L504 454.20000000000005 L501.4 451.6 Z" fill="#fff" stroke="#20a020" stroke-width="1.5"/>
<path d="M508 437.2 L510.6 439.8 L508 442.40000000000003 L505.4 439.8 Z" fill="#fff" stroke="#20a020" stroke-width="1.5"/>
<path d="M512 432.29999999999995 L514.6 434.9 L512 437.5 L509.4 434.9 Z" fill="#fff" stroke="#20a020" stroke-width="1.5"/>
<path d="M516 410.2 L518.6 412.8 L516 415.40000000000003 L513.4 412.8 Z" fill="#fff" stroke="#0000ff" stroke-width="1.5"/>
<path d="M520 351.4 L522.6 354 L520 356.6 L517.4 354 Z" fill="#fff" stroke="#0000ff" stroke-width="1.5"/>
<path d="M524 293.4 L526.6 296 L524 298.6 L521.4 296 Z" fill="#fff" stroke="#0000ff" stroke-width="1.5"/>
<path d="M528 215.4 L530.6 218 L528 220.6 L525.4 218 Z" fill="#fff" stroke="#0000ff" stroke-width="1.5"/>
<path d="M532 259.4 L534.6 262 L532 264.6 L529.4 262 Z" fill="#fff" stroke="#0000ff" stroke-width="1.5"/>
<path d="M536 274.4 L538.6 277 L536 279.6 L533.4 277 Z" fill="#fff" stroke="#0000ff" stroke-width="1.5"/>
<path d="M540 271.4 L542.6 274 L540 276.6 L537.4 274 Z" fill="#fff" stroke="#0000ff" stroke-width="1.5"/>
<path d="M544 341.4 L546.6 344 L544 346.6 L541.4 344 Z" fill="#fff" stroke="#0000ff" stroke-width="1.5"/>
<path d="M548 347.4 L550.6 350 L548 352.6 L545.4 350 Z" fill="#fff" stroke="#0000ff" stroke-width="1.5"/>
<path d="M552 259.4 L554.6 262 L552 264.6 L549.4 262 Z" fill="#fff" stroke="#0000ff" stroke-width="1.5"/>
<path d="M556 203.0 L558.6 205.6 L556 208.2 L553.4 205.6 Z" fill="#fff" stroke="#0000ff" stroke-width="1.5"/>
<path d="M560 266.4 L562.6 269 L560 271.6 L557.4 269 Z" fill="#fff" stroke="#0000ff" stroke-width="1.5"/>
<path d="M564 244.0 L566.6 246.6 L564 249.2 L561.4 246.6 Z" fill="#fff" stroke="#0000ff" stroke-width="1.5"/>
<path d="M568 283.2 L570.6 285.8 L568 288.40000000000003 L565.4 285.8 Z" fill="#fff" stroke="#20a020" stroke-width="1.5"/>
<path d="M572 298.29999999999995 L574.6 300.9 L572 303.5 L569.4 300.9 Z" fill="#fff" stroke="#20a020" stroke-width="1.5"/>
<path d="M576 249.20000000000002 L578.6 251.8 L576 254.4 L573.4 251.8 Z" fill="#fff" stroke="#20a020" stroke-width="1.5"/>
<path d="M580 222.3 L582.6 224.9 L580 227.5 L577.4 224.9 Z" fill="#fff" stroke="#20a020" stroke-width="1.5"/>
<path d="M584 283.2 L586.6 285.8 L584 288.40000000000003 L581.4 285.8 Z" fill="#fff" stroke="#20a020" stroke-width="1.5"/>
<path d="M588 222.3 L590.6 224.9 L588 227.5 L585.4 224.9 Z" fill="#fff" stroke="#20a020" stroke-width="1.5"/>
<path d="M592 232.4 L594.6 235 L592 237.6 L589.4 235 Z" fill="#fff" stroke="#20a020" stroke-width="1.5"/>
<path d="M596 252.3 L598.6 254.9 L596 257.5 L593.4 254.9 Z" fill="#fff" stroke="#20a020" stroke-width="1.5"/>
<path d="M600 266.29999999999995 L602.6 268.9 L600 271.5 L597.4 268.9 Z" fill="#fff" stroke="#20a020" stroke-width="1.5"/>
<path d="M604 306.09999999999997 L606.6 308.7 L604 311.3 L601.4 308.7 Z" fill="#fff" stroke="#20a020" stroke-width="1.5"/>
<path d="M608 252.3 L610.6 254.9 L608 257.5 L605.4 254.9 Z" fill="#fff" stroke="#20a020" stroke-width="1.5"/>
<path d="M612 274.4 L614.6 277 L612 279.6 L609.4 277 Z" fill="#fff" stroke="#20a020" stroke-width="1.5"/>
<path d="M616 288.2 L618.6 290.8 L616 293.40000000000003 L613.4 290.8 Z" fill="#fff" stroke="#20a020" stroke-width="1.5"/>
<path d="M620 322.09999999999997 L622.6 324.7 L620 327.3 L617.4 324.7 Z" fill="#fff" stroke="#20a020" stroke-width="1.5"/>
<path d="M624 271.4 L626.6 274 L624 276.6 L621.4 274 Z" fill="#fff" stroke="#20a020" stroke-width="1.5"/>
<path d="M628 254.29999999999998 L630.6 256.9 L628 259.5 L625.4 256.9 Z" fill="#fff" stroke="#20a020" stroke-width="1.5"/>
<path d="M632 232.1 L634.6 234.7 L632 237.29999999999998 L629.4 234.7 Z" fill="#fff" stroke="#20a020" stroke-width="1.5"/>
<path d="M636 162.3 L638.6 164.9 L636 167.5 L633.4 164.9 Z" fill="#fff" stroke="#20a020" stroke-width="1.5"/>
<path d="M640 281.2 L642.6 283.8 L640 286.40000000000003 L637.4 283.8 Z" fill="#fff" stroke="#20a020" stroke-width="1.5"/>
<path d="M644 269.09999999999997 L646.6 271.7 L644 274.3 L641.4 271.7 Z" fill="#fff" stroke="#20a020" stroke-width="1.5"/>
<path d="M648 298.29999999999995 L650.6 300.9 L648 303.5 L645.4 300.9 Z" fill="#fff" stroke="#20a020" stroke-width="1.5"/>
<path d="M652 288.2 L654.6 290.8 L652 293.40000000000003 L649.4 290.8 Z" fill="#fff" stroke="#20a020" stroke-width="1.5"/>
<path d="M656 256.2 L658.6 258.8 L656 261.40000000000003 L653.4 258.8 Z" fill="#fff" stroke="#20a020" stroke-width="1.5"/>
<path d="M660 298.29999999999995 L662.6 300.9 L660 303.5 L657.4 300.9 Z" fill="#fff" stroke="#20a020" stroke-width="1.5"/>
<path d="M664 288.2 L666.6 290.8 L664 293.40000000000003 L661.4 290.8 Z" fill="#fff" stroke="#20a020" stroke-width="1.5"/>
<path d="M668 286.2 L670.6 288.8 L668 291.40000000000003 L665.4 288.8 Z" fill="#fff" stroke="#20a020" stroke-width="1.5"/>
<path d="M672 319.29999999999995 L674.6 321.9 L672 324.5 L669.4 321.9 Z" fill="#fff" stroke="#20a020" stroke-width="1.5"/>
<path d="M676 295.2 L678.6 297.8 L676 300.40000000000003 L673.4 297.8 Z" fill="#fff" stroke="#20a020" stroke-width="1.5"/>
<path d="M680 256.2 L682.6 258.8 L680 261.40000000000003 L677.4 258.8 Z" fill="#fff" stroke="#20a020" stroke-width="1.5"/>
<path d="M684 239.4 L686.6 242 L684 244.6 L681.4 242 Z" fill="#fff" stroke="#20a020" stroke-width="1.5"/>
<path d="M688 278.4 L690.6 281 L688 283.6 L685.4 281 Z" fill="#fff" stroke="#20a020" stroke-width="1.5"/>
<path d="M692 274.4 L694.6 277 L692 279.6 L689.4 277 Z" fill="#fff" stroke="#20a020" stroke-width="1.5"/>
<path d="M696 261.29999999999995 L698.6 263.9 L696 266.5 L693.4 263.9 Z" fill="#fff" stroke="#20a020" stroke-width="1.5"/>
<path d="M700 237.20000000000002 L702.6 239.8 L700 242.4 L697.4 239.8 Z" fill="#fff" stroke="#20a020" stroke-width="1.5"/>
<path d="M704 274.4 L706.6 277 L704 279.6 L701.4 277 Z" fill="#fff" stroke="#20a020" stroke-width="1.5"/>
<path d="M708 286.2 L710.6 288.8 L708 291.40000000000003 L705.4 288.8 Z" fill="#fff" stroke="#20a020" stroke-width="1.5"/>
<path d="M712 254.29999999999998 L714.6 256.9 L712 259.5 L709.4 256.9 Z" fill="#fff" stroke="#20a020" stroke-width="1.5"/>
<path d="M716 264.29999999999995 L718.6 266.9 L716 269.5 L713.4 266.9 Z" fill="#fff" stroke="#20a020" stroke-width="1.5"/>
<path d="M720 179.4 L722.6 182 L720 184.6 L717.4 182 Z" fill="#fff" stroke="#20a020" stroke-width="1.5"/>
<path d="M724 249.20000000000002 L726.6 251.8 L724 254.4 L721.4 251.8 Z" fill="#fff" stroke="#20a020" stroke-width="1.5"/>
<path d="M728 331.09999999999997 L730.6 333.7 L728 336.3 L725.4 333.7 Z" fill="#fff" stroke="#20a020" stroke-width="1.5"/>
<path d="M732 271.4 L734.6 274 L732 276.6 L729.4 274 Z" fill="#fff" stroke="#20a020" stroke-width="1.5"/>
<path d="M736 256.2 L738.6 258.8 L736 261.40000000000003 L733.4 258.8 Z" fill="#fff" stroke="#20a020" stroke-width="1.5"/>
<path d="M740 269.09999999999997 L742.6 271.7 L740 274.3 L737.4 271.7 Z" fill="#fff" stroke="#20a020" stroke-width="1.5"/>
<path d="M744 191.20000000000002 L746.6 193.8 L744 196.4 L741.4 193.8 Z" fill="#fff" stroke="#20a020" stroke-width="1.5"/>
<path d="M748 242.20000000000002 L750.6 244.8 L748 247.4 L745.4 244.8 Z" fill="#fff" stroke="#20a020" stroke-width="1.5"/>
<path d="M752 237.20000000000002 L754.6 239.8 L752 242.4 L749.4 239.8 Z" fill="#fff" stroke="#20a020" stroke-width="1.5"/>
<path d="M756 315.09999999999997 L758.6 317.7 L756 320.3 L753.4 317.7 Z" fill="#fff" stroke="#20a020" stroke-width="1.5"/>
<path d="M760 308.4 L762.6 311 L760 313.6 L757.4 311 Z" fill="#fff" stroke="#20a020" stroke-width="1.5"/>
<path d="M764 181.1 L766.6 183.7 L764 186.29999999999998 L761.4 183.7 Z" fill="#fff" stroke="#20a020" stroke-width="1.5"/>
<path d="M768 259.29999999999995 L770.6 261.9 L768 264.5 L765.4 261.9 Z" fill="#fff" stroke="#20a020" stroke-width="1.5"/>
<path d="M772 283.2 L774.6 285.8 L772 288.40000000000003 L769.4 285.8 Z" fill="#fff" stroke="#20a020" stroke-width="1.5"/>
<path d="M776 230.20000000000002 L778.6 232.8 L776 235.4 L773.4 232.8 Z" fill="#fff" stroke="#20a020" stroke-width="1.5"/>
<path d="M780 258.59999999999997 L783.3 261.9 L780 265.2 L776.7 261.9 Z" fill="#20a020"/>
<path d="M784 259.7 L787.3 263 L784 266.3 L780.7 263 Z" fill="#0000ff"/>
<path d="M788 236.5 L791.3 239.8 L788 243.10000000000002 L784.7 239.8 Z" fill="#0000ff"/>
<path d="M792 285.5 L795.3 288.8 L792 292.1 L788.7 288.8 Z" fill="#0000ff"/>
<path d="M796 259.7 L799.3 263 L796 266.3 L792.7 263 Z" fill="#0000ff"/>
<path d="M800 229.5 L803.3 232.8 L800 236.10000000000002 L796.7 232.8 Z" fill="#0000ff"/>
<path d="M804 273.3 L807.3 276.6 L804 279.90000000000003 L800.7 276.6 Z" fill="#0000ff"/>
<path d="M808 280.5 L811.3 283.8 L808 287.1 L804.7 283.8 Z" fill="#0000ff"/>
<path d="M812 229.5 L815.3 232.8 L812 236.10000000000002 L808.7 232.8 Z" fill="#0000ff"/>
<path d="M816 268.4 L819.3 271.7 L816 275.0 L812.7 271.7 Z" fill="#0000ff"/>
<path d="M820 309.4 L823.3 312.7 L820 316.0 L816.7 312.7 Z" fill="#0000ff"/>
<path d="M513 354 H527" stroke="#ff00ff" stroke-width="1.3"/>
<path d="M520 347 V361" stroke="#ff00ff" stroke-width="1.1"/>
<path d="M520.5 349.5 L524.5 354 L520.5 358.5 L516.5 354 Z" fill="#ff0000"/>
<rect x="103" y="569.8" width="720" height="1.3" fill="#000"/>
<rect x="517" y="497" width="1.3" height="146" fill="#ffff00"/>
<g clip-path="url(#cl)"><polyline points="483,400 487,566.9 491,577.8 495,573.9 499,565.8 503,582.9 507,572.8 511,573.9 515,569.9 519,559.9 523,580 527,543.9 531,572.8 535,578.9 539,580 543,690 547,690 551,565.8 555,509.7 559,572.8 563,550.9 567,589.9 571,603.9 575,555 579,527.9 583,589 587,527.9 591,537.9 595,557.9 599,571.9 603,612 607,557.9 611,580 615,594 619,628 623,577 627,559.9 631,537.9 635,440 639,586.8 643,575 647,603.9 651,594 655,561.8 659,603.9 663,594 667,591.8 671,625 675,601 679,561.8 683,545 687,584 691,580 695,566.9 699,542.8 703,580 707,591.8 711,559.9 715,570 719,440 723,554.8 727,637 731,577 735,561.8 739,575 743,497 747,547.8 751,542.8 755,621 759,614 763,440 767,564.9 771,589 775,535.7 779,564.9 783,566.9 787,542.8 791,591.8 795,566.9 799,535.7 803,580 807,586.8 811,535.7 815,575 819,616" fill="none" stroke="#8080ff" stroke-width="1.1"/>
<path d="M487 563.6 L490.3 566.9 L487 570.1999999999999 L483.7 566.9 Z" fill="#0000ff"/>
<path d="M491 574.5 L494.3 577.8 L491 581.0999999999999 L487.7 577.8 Z" fill="#0000ff"/>
<path d="M495 570.6 L498.3 573.9 L495 577.1999999999999 L491.7 573.9 Z" fill="#0000ff"/>
<path d="M499 562.5 L502.3 565.8 L499 569.0999999999999 L495.7 565.8 Z" fill="#0000ff"/>
<path d="M503 579.6 L506.3 582.9 L503 586.1999999999999 L499.7 582.9 Z" fill="#0000ff"/>
<path d="M507 569.5 L510.3 572.8 L507 576.0999999999999 L503.7 572.8 Z" fill="#0000ff"/>
<path d="M511 570.6 L514.3 573.9 L511 577.1999999999999 L507.7 573.9 Z" fill="#0000ff"/>
<path d="M515 566.6 L518.3 569.9 L515 573.1999999999999 L511.7 569.9 Z" fill="#0000ff"/>
<path d="M519 556.6 L522.3 559.9 L519 563.1999999999999 L515.7 559.9 Z" fill="#0000ff"/>
<path d="M523 576.7 L526.3 580 L523 583.3 L519.7 580 Z" fill="#0000ff"/>
<path d="M527 540.6 L530.3 543.9 L527 547.1999999999999 L523.7 543.9 Z" fill="#0000ff"/>
<path d="M531 569.5 L534.3 572.8 L531 576.0999999999999 L527.7 572.8 Z" fill="#0000ff"/>
<path d="M535 575.6 L538.3 578.9 L535 582.1999999999999 L531.7 578.9 Z" fill="#0000ff"/>
<path d="M539 576.7 L542.3 580 L539 583.3 L535.7 580 Z" fill="#0000ff"/>
<path d="M543 686.7 L546.3 690 L543 693.3 L539.7 690 Z" fill="#0000ff"/>
<path d="M547 686.7 L550.3 690 L547 693.3 L543.7 690 Z" fill="#0000ff"/>
<path d="M551 562.5 L554.3 565.8 L551 569.0999999999999 L547.7 565.8 Z" fill="#0000ff"/>
<path d="M555 506.4 L558.3 509.7 L555 513.0 L551.7 509.7 Z" fill="#0000ff"/>
<path d="M559 569.5 L562.3 572.8 L559 576.0999999999999 L555.7 572.8 Z" fill="#0000ff"/>
<path d="M563 547.6 L566.3 550.9 L563 554.1999999999999 L559.7 550.9 Z" fill="#0000ff"/>
<path d="M567 586.6 L570.3 589.9 L567 593.1999999999999 L563.7 589.9 Z" fill="#0000ff"/>
<path d="M571 600.6 L574.3 603.9 L571 607.1999999999999 L567.7 603.9 Z" fill="#0000ff"/>
<path d="M575 551.7 L578.3 555 L575 558.3 L571.7 555 Z" fill="#0000ff"/>
<path d="M579 524.6 L582.3 527.9 L579 531.1999999999999 L575.7 527.9 Z" fill="#0000ff"/>
<path d="M583 585.7 L586.3 589 L583 592.3 L579.7 589 Z" fill="#0000ff"/>
<path d="M587 524.6 L590.3 527.9 L587 531.1999999999999 L583.7 527.9 Z" fill="#0000ff"/>
<path d="M591 534.6 L594.3 537.9 L591 541.1999999999999 L587.7 537.9 Z" fill="#0000ff"/>
<path d="M595 554.6 L598.3 557.9 L595 561.1999999999999 L591.7 557.9 Z" fill="#0000ff"/>
<path d="M599 568.6 L602.3 571.9 L599 575.1999999999999 L595.7 571.9 Z" fill="#0000ff"/>
<path d="M603 608.7 L606.3 612 L603 615.3 L599.7 612 Z" fill="#0000ff"/>
<path d="M607 554.6 L610.3 557.9 L607 561.1999999999999 L603.7 557.9 Z" fill="#0000ff"/>
<path d="M611 576.7 L614.3 580 L611 583.3 L607.7 580 Z" fill="#0000ff"/>
<path d="M615 590.7 L618.3 594 L615 597.3 L611.7 594 Z" fill="#0000ff"/>
<path d="M619 624.7 L622.3 628 L619 631.3 L615.7 628 Z" fill="#0000ff"/>
<path d="M623 573.7 L626.3 577 L623 580.3 L619.7 577 Z" fill="#0000ff"/>
<path d="M627 556.6 L630.3 559.9 L627 563.1999999999999 L623.7 559.9 Z" fill="#0000ff"/>
<path d="M631 534.6 L634.3 537.9 L631 541.1999999999999 L627.7 537.9 Z" fill="#0000ff"/>
<path d="M635 436.7 L638.3 440 L635 443.3 L631.7 440 Z" fill="#0000ff"/>
<path d="M639 583.5 L642.3 586.8 L639 590.0999999999999 L635.7 586.8 Z" fill="#0000ff"/>
<path d="M643 571.7 L646.3 575 L643 578.3 L639.7 575 Z" fill="#0000ff"/>
<path d="M647 600.6 L650.3 603.9 L647 607.1999999999999 L643.7 603.9 Z" fill="#0000ff"/>
<path d="M651 590.7 L654.3 594 L651 597.3 L647.7 594 Z" fill="#0000ff"/>
<path d="M655 558.5 L658.3 561.8 L655 565.0999999999999 L651.7 561.8 Z" fill="#0000ff"/>
<path d="M659 600.6 L662.3 603.9 L659 607.1999999999999 L655.7 603.9 Z" fill="#0000ff"/>
<path d="M663 590.7 L666.3 594 L663 597.3 L659.7 594 Z" fill="#0000ff"/>
<path d="M667 588.5 L670.3 591.8 L667 595.0999999999999 L663.7 591.8 Z" fill="#0000ff"/>
<path d="M671 621.7 L674.3 625 L671 628.3 L667.7 625 Z" fill="#0000ff"/>
<path d="M675 597.7 L678.3 601 L675 604.3 L671.7 601 Z" fill="#0000ff"/>
<path d="M679 558.5 L682.3 561.8 L679 565.0999999999999 L675.7 561.8 Z" fill="#0000ff"/>
<path d="M683 541.7 L686.3 545 L683 548.3 L679.7 545 Z" fill="#0000ff"/>
<path d="M687 580.7 L690.3 584 L687 587.3 L683.7 584 Z" fill="#0000ff"/>
<path d="M691 576.7 L694.3 580 L691 583.3 L687.7 580 Z" fill="#0000ff"/>
<path d="M695 563.6 L698.3 566.9 L695 570.1999999999999 L691.7 566.9 Z" fill="#0000ff"/>
<path d="M699 539.5 L702.3 542.8 L699 546.0999999999999 L695.7 542.8 Z" fill="#0000ff"/>
<path d="M703 576.7 L706.3 580 L703 583.3 L699.7 580 Z" fill="#0000ff"/>
<path d="M707 588.5 L710.3 591.8 L707 595.0999999999999 L703.7 591.8 Z" fill="#0000ff"/>
<path d="M711 556.6 L714.3 559.9 L711 563.1999999999999 L707.7 559.9 Z" fill="#0000ff"/>
<path d="M715 566.7 L718.3 570 L715 573.3 L711.7 570 Z" fill="#0000ff"/>
<path d="M719 436.7 L722.3 440 L719 443.3 L715.7 440 Z" fill="#0000ff"/>
<path d="M723 551.5 L726.3 554.8 L723 558.0999999999999 L719.7 554.8 Z" fill="#0000ff"/>
<path d="M727 633.7 L730.3 637 L727 640.3 L723.7 637 Z" fill="#0000ff"/>
<path d="M731 573.7 L734.3 577 L731 580.3 L727.7 577 Z" fill="#0000ff"/>
<path d="M735 558.5 L738.3 561.8 L735 565.0999999999999 L731.7 561.8 Z" fill="#0000ff"/>
<path d="M739 571.7 L742.3 575 L739 578.3 L735.7 575 Z" fill="#0000ff"/>
<path d="M743 493.7 L746.3 497 L743 500.3 L739.7 497 Z" fill="#0000ff"/>
<path d="M747 544.5 L750.3 547.8 L747 551.0999999999999 L743.7 547.8 Z" fill="#0000ff"/>
<path d="M751 539.5 L754.3 542.8 L751 546.0999999999999 L747.7 542.8 Z" fill="#0000ff"/>
<path d="M755 617.7 L758.3 621 L755 624.3 L751.7 621 Z" fill="#0000ff"/>
<path d="M759 610.7 L762.3 614 L759 617.3 L755.7 614 Z" fill="#0000ff"/>
<path d="M763 436.7 L766.3 440 L763 443.3 L759.7 440 Z" fill="#0000ff"/>
<path d="M767 561.6 L770.3 564.9 L767 568.1999999999999 L763.7 564.9 Z" fill="#0000ff"/>
<path d="M771 585.7 L774.3 589 L771 592.3 L767.7 589 Z" fill="#0000ff"/>
<path d="M775 532.4000000000001 L778.3 535.7 L775 539.0 L771.7 535.7 Z" fill="#0000ff"/>
<path d="M779 561.6 L782.3 564.9 L779 568.1999999999999 L775.7 564.9 Z" fill="#0000ff"/>
<path d="M783 563.6 L786.3 566.9 L783 570.1999999999999 L779.7 566.9 Z" fill="#0000ff"/>
<path d="M787 539.5 L790.3 542.8 L787 546.0999999999999 L783.7 542.8 Z" fill="#0000ff"/>
<path d="M791 588.5 L794.3 591.8 L791 595.0999999999999 L787.7 591.8 Z" fill="#0000ff"/>
<path d="M795 563.6 L798.3 566.9 L795 570.1999999999999 L791.7 566.9 Z" fill="#0000ff"/>
<path d="M799 532.4000000000001 L802.3 535.7 L799 539.0 L795.7 535.7 Z" fill="#0000ff"/>
<path d="M803 576.7 L806.3 580 L803 583.3 L799.7 580 Z" fill="#0000ff"/>
<path d="M807 583.5 L810.3 586.8 L807 590.0999999999999 L803.7 586.8 Z" fill="#0000ff"/>
<path d="M811 532.4000000000001 L814.3 535.7 L811 539.0 L807.7 535.7 Z" fill="#0000ff"/>
<path d="M815 571.7 L818.3 575 L815 578.3 L811.7 575 Z" fill="#0000ff"/>
<path d="M819 612.7 L822.3 616 L819 619.3 L815.7 616 Z" fill="#0000ff"/>
</g></svg>
<div class="t" style="left:102.3px;top:70.46px;font-size:13px;line-height:13px;font-weight:bold;transform:scaleX(0.9852);transform-origin:0 0;">2025 Nov 7; (2673) Lossignol occults HIP 60938 Observed by Toshihiro Horikawa</div>
<div class="t" style="left:598px;top:70.94px;font-size:12px;line-height:12px;transform:scaleX(1.0069);transform-origin:0 0;">/ PSF-Frame Photometry /</div>
<div class="t" style="left:618.7px;top:82.74px;font-size:12px;line-height:12px;transform:scaleX(0.9344);transform-origin:0 0;">Dist.=554125472km Veloc.=41137m/sec</div>
<div class="t" style="left:110.6px;top:411.02px;font-size:12px;line-height:12px;transform:scaleX(0.8391);transform-origin:0 0;">1000</div>
<div class="t" style="left:110.6px;top:381.8px;font-size:12px;line-height:12px;transform:scaleX(0.8391);transform-origin:0 0;">2000</div>
<div class="t" style="left:110.6px;top:352.58px;font-size:12px;line-height:12px;transform:scaleX(0.8391);transform-origin:0 0;">3000</div>
<div class="t" style="left:110.6px;top:323.36px;font-size:12px;line-height:12px;transform:scaleX(0.8391);transform-origin:0 0;">4000</div>
<div class="t" style="left:110.6px;top:294.14px;font-size:12px;line-height:12px;transform:scaleX(0.8391);transform-origin:0 0;">5000</div>
<div class="t" style="left:110.6px;top:264.92px;font-size:12px;line-height:12px;transform:scaleX(0.8391);transform-origin:0 0;">6000</div>
<div class="t" style="left:110.6px;top:235.7px;font-size:12px;line-height:12px;transform:scaleX(0.8391);transform-origin:0 0;">7000</div>
<div class="t" style="left:110.6px;top:206.48px;font-size:12px;line-height:12px;transform:scaleX(0.8391);transform-origin:0 0;">8000</div>
<div class="t" style="left:110.6px;top:177.26px;font-size:12px;line-height:12px;transform:scaleX(0.8391);transform-origin:0 0;">9000</div>
<div class="t" style="left:103.3px;top:148.04px;font-size:12px;line-height:12px;transform:scaleX(0.8541);transform-origin:0 0;">10000</div>
<div class="t" style="left:103.3px;top:118.82px;font-size:12px;line-height:12px;transform:scaleX(0.8775);transform-origin:0 0;">11000</div>
<div class="t" style="left:136.5px;top:440.72px;font-size:11px;line-height:11px;">0</div>
<div class="t" style="left:164.5px;top:456.74px;font-size:12px;line-height:12px;transform:scaleX(0.8616);transform-origin:0 0;">2520</div>
<div class="t" style="left:284.5px;top:456.74px;font-size:12px;line-height:12px;transform:scaleX(0.8616);transform-origin:0 0;">2550</div>
<div class="t" style="left:404.5px;top:456.74px;font-size:12px;line-height:12px;transform:scaleX(0.8616);transform-origin:0 0;">2580</div>
<div class="t" style="left:524.5px;top:456.74px;font-size:12px;line-height:12px;transform:scaleX(0.8616);transform-origin:0 0;">2610</div>
<div class="t" style="left:644.5px;top:456.74px;font-size:12px;line-height:12px;transform:scaleX(0.8616);transform-origin:0 0;">2640</div>
<div class="t" style="left:764.5px;top:456.74px;font-size:12px;line-height:12px;transform:scaleX(0.8616);transform-origin:0 0;">2670</div>
<div class="t" style="left:465.6px;top:137.56px;font-size:13px;line-height:13px;font-weight:bold;transform:scaleX(1.1322);transform-origin:0 0;">Event Time : 20h11m02.872s  +/- 0.030s  S/N=4.96</div>
<div class="t" style="left:102.3px;top:474.04px;font-size:12px;line-height:12px;transform:scaleX(0.9532);transform-origin:0 0;">Exp=34.4msec / Frm No.2606.0 / Frm Mid= 20h11m2.8854s,  End= 2.9027s / Event=Frm mid -0.0132s +/-0.023s / CctAngle=81.3deg</div>
<div class="t" style="left:101px;top:649.24px;font-size:12px;line-height:12px;color:#222;transform:scaleX(0.9183);transform-origin:0 0;">S/N vs Error</div>
<div class="a" style="left:87px;top:655px;width:752px;height:92px;background:#f0f0f0;border-radius:0 0 7px 7px"></div>
<div class="t" style="left:94px;top:659.72px;font-size:11px;line-height:11px;transform:scaleX(1.0658);transform-origin:0 0;">Current-</div>
<div class="t" style="left:103px;top:675.72px;font-size:11px;line-height:11px;transform:scaleX(0.9439);transform-origin:0 0;">Frame</div>
<div class="t" style="left:154px;top:659.72px;font-size:11px;line-height:11px;transform:scaleX(0.9854);transform-origin:0 0;">Luminous</div>
<div class="t" style="left:153.5px;top:675.72px;font-size:11px;line-height:11px;transform:scaleX(1.0496);transform-origin:0 0;">Intensity</div>
<div class="ed" style="left:94px;top:691px;width:44px;height:16px;background:#fff;font-size:11px;line-height:16px;padding-left:3px;">2606.0</div>
<div class="ed" style="left:150px;top:691px;width:52px;height:16px;background:#fff;font-size:11px;line-height:16px;padding-left:3px;">3251.1</div>
<div class="a" style="left:213px;top:661px;width:160px;height:18px;background:repeating-conic-gradient(#e8e8e8 0 25%,#ffffff 0 50%) 0 0/2px 2px"></div>
<div class="btn" style="left:213px;top:661px;width:16px;height:16px;"><span style="font-size:12px;"><svg width="6" height="8" viewBox="0 0 6 8"><path d="M5 0 L1 4 L5 8Z" fill="#000"/></svg></span></div>
<div class="btn" style="left:355px;top:661px;width:16px;height:16px;"><span style="font-size:12px;"><svg width="6" height="8" viewBox="0 0 6 8"><path d="M1 0 L5 4 L1 8Z" fill="#000"/></svg></span></div>
<div class="btn" style="left:285px;top:661px;width:15px;height:16px;"><span style="font-size:12px;"></span></div>
<div class="btn" style="left:214px;top:687px;width:39px;height:22px;"><span style="font-size:11px;">-10Sec</span></div>
<div class="btn" style="left:258px;top:687px;width:31px;height:22px;"><span style="font-size:11px;">-1Sec</span></div>
<div class="btn" style="left:294px;top:687px;width:33px;height:22px;"><span style="font-size:11px;">+1Sec</span></div>
<div class="btn" style="left:332px;top:687px;width:39px;height:22px;"><span style="font-size:11px;">+10Sec</span></div>
<div class="t" style="left:379.3px;top:667.32px;font-size:11px;line-height:11px;">Scale</div>
<div class="ed" style="left:418px;top:659px;width:18px;height:15px;background:#fff;font-size:11px;line-height:15px;padding-left:3px;">2</div>
<div class="t" style="left:382.4px;top:691.72px;font-size:11px;line-height:11px;">Radius</div>
<div class="ed" style="left:418px;top:690px;width:18px;height:15px;background:#fff;font-size:11px;line-height:15px;padding-left:3px;">3</div>
<div class="btn" style="left:442px;top:658px;width:15px;height:9px;"><span style="font-size:12px;"><svg width="7" height="4" viewBox="0 0 7 4"><path d="M0 4 L3.5 0 L7 4Z" fill="#000"/></svg></span></div>
<div class="btn" style="left:442px;top:669px;width:15px;height:10px;"><span style="font-size:12px;"><svg width="7" height="4" viewBox="0 0 7 4"><path d="M0 0 L3.5 4 L7 0Z" fill="#000"/></svg></span></div>
<div class="btn" style="left:442px;top:690px;width:15px;height:9px;"><span style="font-size:12px;"><svg width="7" height="4" viewBox="0 0 7 4"><path d="M0 4 L3.5 0 L7 4Z" fill="#000"/></svg></span></div>
<div class="btn" style="left:442px;top:701px;width:15px;height:10px;"><span style="font-size:12px;"><svg width="7" height="4" viewBox="0 0 7 4"><path d="M0 0 L3.5 4 L7 0Z" fill="#000"/></svg></span></div>
<div class="chk" style="left:94px;top:720px;width:10px;height:10px;"><svg width="9" height="9" viewBox="0 0 9 9" style="position:absolute;left:0px;top:0px"><path d="M1.4 3.6 L3.2 6 L6.6 1.6" stroke="#000" stroke-width="1.9" fill="none" stroke-linecap="square"/></svg></div>
<div class="t" style="left:111.5px;top:720.22px;font-size:11px;line-height:11px;transform:scaleX(1.0472);transform-origin:0 0;">Show Image of Clicked point</div>
<div class="chk" style="left:94px;top:736px;width:10px;height:10px;"></div>
<div class="t" style="left:111.5px;top:736.42px;font-size:11px;line-height:11px;transform:scaleX(1.0451);transform-origin:0 0;">Reproduce Aperture Position</div>
<div class="btn" style="left:268px;top:718px;width:71px;height:22px;"><span style="font-size:11px;">Save Image</span></div>
<div class="btn" style="left:346px;top:718px;width:116px;height:22px;"><span style="font-size:11px;">Copy to ClipBoard</span></div>
<div class="grp" style="left:465px;top:662px;width:46px;height:77px;"></div>
<div class="t glab" style="left:470px;top:655px;font-size:12px;line-height:14px;">Y Axis</div>
<div class="t" style="left:470px;top:667.72px;font-size:11px;line-height:11px;transform:scaleX(0.9624);transform-origin:0 0;">Min Max</div>
<div class="btn" style="left:470px;top:678px;width:15px;height:15px;"><span style="font-size:12px;"><svg width="9" height="5" viewBox="0 0 9 5"><path d="M0 5 L4.5 0 L9 5Z" fill="#000"/></svg></span></div>
<div class="btn" style="left:470px;top:697px;width:15px;height:16px;"><span style="font-size:12px;"></span></div>
<div class="btn" style="left:470px;top:718px;width:15px;height:16px;"><span style="font-size:12px;"><svg width="9" height="5" viewBox="0 0 9 5"><path d="M0 0 L4.5 5 L9 0Z" fill="#000"/></svg></span></div>
<div class="btn" style="left:491px;top:678px;width:15px;height:15px;"><span style="font-size:12px;"><svg width="9" height="5" viewBox="0 0 9 5"><path d="M0 5 L4.5 0 L9 5Z" fill="#000"/></svg></span></div>
<div class="btn" style="left:491px;top:697px;width:15px;height:16px;"><span style="font-size:12px;"></span></div>
<div class="btn" style="left:491px;top:718px;width:15px;height:16px;"><span style="font-size:12px;"><svg width="9" height="5" viewBox="0 0 9 5"><path d="M0 0 L4.5 5 L9 0Z" fill="#000"/></svg></span></div>
<div class="grp" style="left:517px;top:662px;width:57px;height:49px;"></div>
<div class="t glab" style="left:523px;top:655px;font-size:12px;line-height:14px;">Line</div>
<div class="chk" style="left:525px;top:670px;width:10px;height:10px;"><svg width="9" height="9" viewBox="0 0 9 9" style="position:absolute;left:0px;top:0px"><path d="M1.4 3.6 L3.2 6 L6.6 1.6" stroke="#000" stroke-width="1.9" fill="none" stroke-linecap="square"/></svg></div>
<div class="t" style="left:542.6px;top:668.72px;font-size:11px;line-height:11px;">Axis</div>
<div class="chk" style="left:525px;top:684px;width:10px;height:10px;"><svg width="9" height="9" viewBox="0 0 9 9" style="position:absolute;left:0px;top:0px"><path d="M1.4 3.6 L3.2 6 L6.6 1.6" stroke="#000" stroke-width="1.9" fill="none" stroke-linecap="square"/></svg></div>
<div class="t" style="left:542.6px;top:683.52px;font-size:11px;line-height:11px;">Data</div>
<div class="btn" style="left:524px;top:695px;width:44px;height:13px;"><span style="font-size:11px;">Hilight</span></div>
<div class="btn" style="left:517px;top:718px;width:62px;height:26px;"><span style="font-size:11px;">[3D] Image</span></div>
<div class="grp" style="left:580px;top:662px;width:53px;height:49px;"></div>
<div class="t glab" style="left:585px;top:655px;font-size:12px;line-height:14px;">Width</div>
<svg class="a" style="left:589px;top:674px" width="12" height="12" viewBox="0 0 12 12"><circle cx="6" cy="6" r="5" fill="#fff"/><path d="M2.1 9.9 A5.5 5.5 0 0 1 9.9 2.1" stroke="#888" stroke-width="1.2" fill="none"/><path d="M9.9 2.1 A5.5 5.5 0 0 1 2.1 9.9" stroke="#f4f4f4" stroke-width="1.1" fill="none"/><path d="M2.9 9.1 A4.4 4.4 0 0 1 9.1 2.9" stroke="#3a3a3a" stroke-width="1" fill="none"/><path d="M9.1 2.9 A4.4 4.4 0 0 1 2.9 9.1" stroke="#dcdcdc" stroke-width="0.9" fill="none"/><circle cx="6" cy="6" r="1.9" fill="#000"/></svg>
<div class="t" style="left:606px;top:673.72px;font-size:11px;line-height:11px;">Part</div>
<svg class="a" style="left:589px;top:695px" width="12" height="12" viewBox="0 0 12 12"><circle cx="6" cy="6" r="5" fill="#fff"/><path d="M2.1 9.9 A5.5 5.5 0 0 1 9.9 2.1" stroke="#888" stroke-width="1.2" fill="none"/><path d="M9.9 2.1 A5.5 5.5 0 0 1 2.1 9.9" stroke="#f4f4f4" stroke-width="1.1" fill="none"/><path d="M2.9 9.1 A4.4 4.4 0 0 1 9.1 2.9" stroke="#3a3a3a" stroke-width="1" fill="none"/><path d="M9.1 2.9 A4.4 4.4 0 0 1 2.9 9.1" stroke="#dcdcdc" stroke-width="0.9" fill="none"/></svg>
<div class="t" style="left:606px;top:694.32px;font-size:11px;line-height:11px;">Entire</div>
<div class="btn" style="left:642px;top:658px;width:141px;height:16px;"><span style="font-size:11px;">Correction for absorption</span></div>
<div class="btn" style="left:642px;top:679px;width:101px;height:15px;"><span style="font-size:11px;">Noise Reduction</span></div>
<div class="btn" style="left:748px;top:679px;width:35px;height:15px;"><span style="font-size:11px;">Reset</span></div>
<div class="btn" style="left:798px;top:658px;width:34px;height:23px;"><span style="font-size:11px;">close</span></div>
<div class="chk" style="left:641px;top:700px;width:10px;height:10px;"><svg width="9" height="9" viewBox="0 0 9 9" style="position:absolute;left:0px;top:0px"><path d="M1.4 3.6 L3.2 6 L6.6 1.6" stroke="#000" stroke-width="1.9" fill="none" stroke-linecap="square"/></svg></div>
<div class="t" style="left:658.4px;top:699.42px;font-size:11px;line-height:11px;">Information</div>
<div class="chk" style="left:790px;top:697px;width:10px;height:10px;"><svg width="9" height="9" viewBox="0 0 9 9" style="position:absolute;left:0px;top:0px"><path d="M1.4 3.6 L3.2 6 L6.6 1.6" stroke="#000" stroke-width="1.9" fill="none" stroke-linecap="square"/></svg></div>
<div class="t" style="left:807.5px;top:696.62px;font-size:11px;line-height:11px;">ID</div>
<div class="btn" style="left:630px;top:719px;width:104px;height:25px;"><span style="font-size:14px;font-weight:bold;color:#1a2850;">Make Report</span></div>
<div class="grp" style="left:740px;top:710px;width:93px;height:32px;"></div>
<div class="t glab" style="left:746px;top:703px;font-size:12px;line-height:14px;">Object</div>
<div class="btn" style="left:746px;top:720px;width:18px;height:17px;"><span style="font-size:11px;color:#a0a0a0;">A</span></div>
<div class="btn" style="left:768px;top:720px;width:18px;height:17px;"><span style="font-size:11px;">B</span></div>
<div class="btn" style="left:790px;top:720px;width:19px;height:17px;"><span style="font-size:11px;">C</span></div>
<div class="btn" style="left:813px;top:720px;width:14px;height:17px;"><span style="font-size:11px;">L</span></div>
<div class="win" style="left:843px;top:9px;width:192px;height:794px;border-radius:8px 8px 8px 8px"></div>
<div class="a" style="left:844px;top:10px;width:192px;height:24px;background:#f3f3f3;border-radius:8px 8px 0 0"></div>
<svg class="a" style="left:847px;top:13px" width="16" height="16" viewBox="0 0 16 16"><path d="M0 0.5 H3.5 L4 0 H16 V16 H14.5 L14 15 H3 L1 14 L0 13 Z" fill="#000080"/><path d="M0 2 L3 1.5 L3.5 6 L1 8 L0 7Z M7 2 L10 3 L9 7 L7 6Z M12 10 L16 9.5 L16 16 L14 13Z M1 10 L3 10 L4 13 L1 13Z" fill="#0000ff"/><rect x="4" y="1" width="2.1" height="13" fill="#ffff00"/><rect x="0" y="8" width="16" height="1.2" fill="#ffff00"/><path d="M5 5.9 L8.5 8.6 L5 11.6 L1.9 8.6Z" fill="#ffff00"/><rect x="0.9" y="1.6999999999999997" width="1.2" height="1.2" fill="#e8e8ff"/><rect x="9.9" y="0.9" width="1.2" height="1.2" fill="#e8e8ff"/><rect x="12.0" y="0.9" width="1.2" height="1.2" fill="#e8e8ff"/><rect x="13.9" y="1.9" width="1.2" height="1.2" fill="#e8e8ff"/><rect x="1.0" y="11.9" width="1.2" height="1.2" fill="#e8e8ff"/><rect x="1.9" y="12.8" width="1.2" height="1.2" fill="#e8e8ff"/><rect x="6.0" y="13.700000000000001" width="1.2" height="1.2" fill="#e8e8ff"/><rect x="7.800000000000001" y="12.8" width="1.2" height="1.2" fill="#e8e8ff"/><rect x="9.9" y="12.8" width="1.2" height="1.2" fill="#e8e8ff"/><rect x="12.0" y="11.8" width="1.2" height="1.2" fill="#e8e8ff"/><rect x="13.9" y="12.8" width="1.2" height="1.2" fill="#e8e8ff"/></svg>
<div class="t" style="left:868px;top:15.26px;font-size:13px;line-height:13px;color:#858585;">Fre...</div>
<svg class="a" style="left:913px;top:13px" width="110" height="16" viewBox="0 0 110 16"><path d="M6 8 H16" stroke="#777" stroke-width="1"/><rect x="48.5" y="2.5" width="10" height="10" fill="none" stroke="#777" stroke-width="1"/><path d="M94.5 2.5 L105.5 13.5 M105.5 2.5 L94.5 13.5" stroke="#777" stroke-width="1"/></svg>
<div class="grp" style="left:845px;top:39px;width:181px;height:51px;"></div>
<div class="t" style="left:852.5px;top:35.14px;font-size:12px;line-height:12px;font-weight:bold;transform:scaleX(1.0080);transform-origin:0 0;">Spectral Effect</div>
<div class="a" style="left:849px;top:37px;width:91px;height:5px;background:#f0f0f0;"></div>
<div class="t" style="left:852.5px;top:35.14px;font-size:12px;line-height:12px;font-weight:bold;transform:scaleX(1.0080);transform-origin:0 0;">Spectral Effect</div>
<div class="t" style="left:852.5px;top:51.22px;font-size:11px;line-height:11px;transform:scaleX(0.9231);transform-origin:0 0;">CCD</div>
<div class="ed" style="left:884px;top:46px;width:83px;height:16px;background:#fff;font-size:12px;line-height:16px;padding-left:2px;">IMX290</div>
<div class="btn" style="left:952px;top:48px;width:15px;height:14px;"><span style="font-size:12px;"><svg width="7" height="4" viewBox="0 0 7 4"><path d="M0 0 L3.5 4 L7 0Z" fill="#000"/></svg></span></div>
<div class="btn" style="left:974px;top:46px;width:45px;height:15px;"><span style="font-size:11px;">Graph</span></div>
<div class="t" style="left:852.5px;top:75.72px;font-size:11px;line-height:11px;transform:scaleX(0.9418);transform-origin:0 0;">Star</div>
<div class="ed" style="left:884px;top:69px;width:43px;height:16px;background:#fff;font-size:12px;line-height:16px;padding-left:2px;">K6</div>
<div class="btn" style="left:912px;top:71px;width:15px;height:14px;"><span style="font-size:12px;"><svg width="7" height="4" viewBox="0 0 7 4"><path d="M0 0 L3.5 4 L7 0Z" fill="#000"/></svg></span></div>
<div class="t" style="left:934.5px;top:75.72px;font-size:11px;line-height:11px;transform:scaleX(0.9201);transform-origin:0 0;">or</div>
<div class="t" style="left:949.8px;top:75.72px;font-size:11px;line-height:11px;transform:scaleX(0.9271);transform-origin:0 0;">B-V</div>
<div class="ed" style="left:972px;top:70px;width:44px;height:16px;background:#fff;font-size:11px;line-height:16px;padding-left:3px;">1.12</div>
<div class="grp" style="left:845px;top:97px;width:181px;height:44px;"></div>
<div class="a" style="left:849px;top:95px;width:120px;height:5px;background:#f0f0f0;"></div>
<div class="t" style="left:852.5px;top:93.24px;font-size:12px;line-height:12px;font-weight:bold;transform:scaleX(0.9795);transform-origin:0 0;">Object's Movement</div>
<div class="t" style="left:852.5px;top:105.22px;font-size:11px;line-height:11px;transform:scaleX(0.9579);transform-origin:0 0;">Distance</div>
<div class="t" style="left:938.5px;top:105.22px;font-size:11px;line-height:11px;transform:scaleX(0.9680);transform-origin:0 0;">Shadow's Velocity</div>
<div class="ed" style="left:852px;top:118px;width:68px;height:16px;background:#fff;font-size:11px;line-height:16px;padding-left:3px;">554125472</div>
<div class="t" style="left:924.6px;top:130.12px;font-size:11px;line-height:11px;transform:scaleX(0.8184);transform-origin:0 0;">km</div>
<div class="ed" style="left:948px;top:118px;width:44px;height:16px;background:#fff;font-size:11px;line-height:16px;padding-left:3px;">41137.0</div>
<div class="t" style="left:996.8px;top:130.12px;font-size:11px;line-height:11px;transform:scaleX(0.8862);transform-origin:0 0;">m/sec</div>
<div class="grp" style="left:845px;top:148px;width:181px;height:106px;"></div>
<div class="a" style="left:849px;top:146px;width:160px;height:5px;background:#f0f0f0;"></div>
<div class="t" style="left:852.5px;top:143.54px;font-size:12px;line-height:12px;font-weight:bold;transform:scaleX(0.9719);transform-origin:0 0;">Frame range of Star &amp; BKG</div>
<div class="t" style="left:852.5px;top:156.22px;font-size:11px;line-height:11px;transform:scaleX(0.9692);transform-origin:0 0;">Appearance</div>
<div class="t" style="left:916.6px;top:156.24px;font-size:12px;line-height:12px;font-weight:bold;transform:scaleX(0.9653);transform-origin:0 0;">before</div>
<div class="t" style="left:959.7px;top:156.24px;font-size:12px;line-height:12px;font-weight:bold;transform:scaleX(0.9806);transform-origin:0 0;">Step</div>
<div class="t" style="left:995.8px;top:156.24px;font-size:12px;line-height:12px;font-weight:bold;transform:scaleX(0.9612);transform-origin:0 0;">after</div>
<div class="ed" style="left:852px;top:168px;width:36px;height:15px;background:#fff;font-size:11px;line-height:15px;padding-left:3px;">6231.0</div>
<div class="btn" style="left:894px;top:168px;width:21px;height:15px;"><span style="font-size:11px;">Fix</span></div>
<div class="ed" style="left:925px;top:170px;width:25px;height:15px;background:#fff;font-size:11px;line-height:15px;padding-left:3px;">-2</div>
<div class="ed" style="left:961px;top:170px;width:23px;height:15px;background:#fff;font-size:11px;line-height:15px;padding-left:3px;">0</div>
<div class="ed" style="left:997px;top:170px;width:21px;height:15px;background:#fff;font-size:11px;line-height:15px;padding-left:3px;">65</div>
<div class="btn" style="left:927px;top:190px;width:12px;height:14px;"><span style="font-size:12px;"><svg width="4" height="7" viewBox="0 0 4 7"><path d="M4 0 L0 3.5 L4 7Z" fill="#000"/></svg></span></div>
<div class="btn" style="left:941px;top:190px;width:12px;height:14px;"><span style="font-size:12px;"><svg width="4" height="7" viewBox="0 0 4 7"><path d="M0 0 L4 3.5 L0 7Z" fill="#000"/></svg></span></div>
<div class="btn" style="left:961px;top:190px;width:12px;height:14px;"><span style="font-size:12px;"><svg width="4" height="7" viewBox="0 0 4 7"><path d="M4 0 L0 3.5 L4 7Z" fill="#000"/></svg></span></div>
<div class="btn" style="left:975px;top:190px;width:12px;height:14px;"><span style="font-size:12px;"><svg width="4" height="7" viewBox="0 0 4 7"><path d="M0 0 L4 3.5 L0 7Z" fill="#000"/></svg></span></div>
<div class="btn" style="left:997px;top:190px;width:12px;height:14px;"><span style="font-size:12px;"><svg width="4" height="7" viewBox="0 0 4 7"><path d="M4 0 L0 3.5 L4 7Z" fill="#000"/></svg></span></div>
<div class="btn" style="left:1011px;top:190px;width:12px;height:14px;"><span style="font-size:12px;"><svg width="4" height="7" viewBox="0 0 4 7"><path d="M0 0 L4 3.5 L0 7Z" fill="#000"/></svg></span></div>
<div class="t" style="left:852.5px;top:187.72px;font-size:11px;line-height:11px;transform:scaleX(0.9743);transform-origin:0 0;">Intermidiate</div>
<div class="ed" style="left:852px;top:199px;width:36px;height:15px;background:#fff;font-size:11px;line-height:15px;padding-left:3px;">3251.1</div>
<div class="chk" style="left:894px;top:201px;width:9px;height:9px;"></div>
<div class="t" style="left:912.6px;top:200.72px;font-size:11px;line-height:11px;transform:scaleX(0.8811);transform-origin:0 0;">D</div>
<div class="t" style="left:852.5px;top:219.62px;font-size:11px;line-height:11px;transform:scaleX(0.9663);transform-origin:0 0;">Disappearance</div>
<div class="ed" style="left:925px;top:213px;width:25px;height:15px;background:#fff;font-size:11px;line-height:15px;padding-left:3px;">-8</div>
<div class="ed" style="left:961px;top:213px;width:23px;height:15px;background:#fff;font-size:11px;line-height:15px;padding-left:3px;">0</div>
<div class="ed" style="left:997px;top:213px;width:21px;height:15px;background:#fff;font-size:11px;line-height:15px;padding-left:3px;">12</div>
<div class="ed" style="left:852px;top:231px;width:36px;height:15px;background:#fff;font-size:11px;line-height:15px;padding-left:3px;">234.2</div>
<div class="btn" style="left:894px;top:232px;width:21px;height:15px;"><span style="font-size:11px;">Fix</span></div>
<div class="btn" style="left:927px;top:233px;width:12px;height:15px;"><span style="font-size:12px;"><svg width="4" height="7" viewBox="0 0 4 7"><path d="M4 0 L0 3.5 L4 7Z" fill="#000"/></svg></span></div>
<div class="btn" style="left:941px;top:233px;width:12px;height:15px;"><span style="font-size:12px;"><svg width="4" height="7" viewBox="0 0 4 7"><path d="M0 0 L4 3.5 L0 7Z" fill="#000"/></svg></span></div>
<div class="btn" style="left:961px;top:233px;width:12px;height:15px;"><span style="font-size:12px;"><svg width="4" height="7" viewBox="0 0 4 7"><path d="M4 0 L0 3.5 L4 7Z" fill="#000"/></svg></span></div>
<div class="btn" style="left:975px;top:233px;width:12px;height:15px;"><span style="font-size:12px;"><svg width="4" height="7" viewBox="0 0 4 7"><path d="M0 0 L4 3.5 L0 7Z" fill="#000"/></svg></span></div>
<div class="btn" style="left:997px;top:233px;width:12px;height:15px;"><span style="font-size:12px;"><svg width="4" height="7" viewBox="0 0 4 7"><path d="M4 0 L0 3.5 L4 7Z" fill="#000"/></svg></span></div>
<div class="btn" style="left:1011px;top:233px;width:12px;height:15px;"><span style="font-size:12px;"><svg width="4" height="7" viewBox="0 0 4 7"><path d="M0 0 L4 3.5 L0 7Z" fill="#000"/></svg></span></div>
<div class="grp" style="left:845px;top:263px;width:181px;height:46px;"></div>
<div class="a" style="left:849px;top:261px;width:168px;height:5px;background:#f0f0f0;"></div>
<div class="t" style="left:852.5px;top:259.14px;font-size:12px;line-height:12px;font-weight:bold;transform:scaleX(0.9793);transform-origin:0 0;">Frame Range for Processing</div>
<div class="ed" style="left:852px;top:274px;width:28px;height:14px;background:#fff;font-size:11px;line-height:14px;padding-left:3px;">-8</div>
<div class="btn" style="left:852px;top:292px;width:14px;height:14px;"><span style="font-size:12px;"><svg width="4" height="7" viewBox="0 0 4 7"><path d="M4 0 L0 3.5 L4 7Z" fill="#000"/></svg></span></div>
<div class="btn" style="left:868px;top:292px;width:15px;height:14px;"><span style="font-size:12px;"><svg width="4" height="7" viewBox="0 0 4 7"><path d="M0 0 L4 3.5 L0 7Z" fill="#000"/></svg></span></div>
<div class="ed" style="left:900px;top:274px;width:28px;height:14px;background:#fff;font-size:11px;line-height:14px;padding-left:3px;">64</div>
<div class="btn" style="left:900px;top:292px;width:14px;height:14px;"><span style="font-size:12px;"><svg width="4" height="7" viewBox="0 0 4 7"><path d="M4 0 L0 3.5 L4 7Z" fill="#000"/></svg></span></div>
<div class="btn" style="left:916px;top:292px;width:15px;height:14px;"><span style="font-size:12px;"><svg width="4" height="7" viewBox="0 0 4 7"><path d="M0 0 L4 3.5 L0 7Z" fill="#000"/></svg></span></div>
<div class="chk" style="left:948px;top:275px;width:9px;height:9px;"><svg width="9" height="9" viewBox="0 0 9 9" style="position:absolute;left:0px;top:0px"><path d="M1.4 3.6 L3.2 6 L6.6 1.6" stroke="#000" stroke-width="1.9" fill="none" stroke-linecap="square"/></svg></div>
<div class="t" style="left:966.3px;top:274.52px;font-size:11px;line-height:11px;transform:scaleX(0.9664);transform-origin:0 0;">SelectArea</div>
<div class="t" style="left:940.5px;top:295.42px;font-size:11px;line-height:11px;transform:scaleX(0.9685);transform-origin:0 0;">DataNum</div>
<div class="ed" style="left:988px;top:288px;width:28px;height:16px;background:#fff;font-size:12px;line-height:16px;padding-left:3px;font-weight:bold;">73</div>
<div class="grp" style="left:845px;top:318px;width:181px;height:121px;"></div>
<div class="a" style="left:849px;top:316px;width:135px;height:5px;background:#f0f0f0;"></div>
<div class="t" style="left:852.5px;top:312.94px;font-size:12px;line-height:12px;font-weight:bold;">Central Time of  Event</div>
<div class="t" style="left:852.5px;top:329.14px;font-size:12px;line-height:12px;font-weight:bold;transform:scaleX(0.9837);transform-origin:0 0;">Component 1  [Single Star]</div>
<div class="t" style="left:852.5px;top:343.52px;font-size:11px;line-height:11px;transform:scaleX(0.9288);transform-origin:0 0;">Frame Number</div>
<div class="t" style="left:940.5px;top:343.52px;font-size:11px;line-height:11px;transform:scaleX(0.9582);transform-origin:0 0;">Offset Time</div>
<div class="ed" style="left:852px;top:357px;width:60px;height:15px;background:#fff;font-size:12px;line-height:15px;padding-left:3px;font-weight:bold;">2606.0</div>
<div class="t" style="left:924.6px;top:363.84px;font-size:12px;line-height:12px;font-weight:bold;transform:scaleX(0.8562);transform-origin:0 0;">+</div>
<div class="ed" style="left:936px;top:357px;width:40px;height:15px;background:#fff;font-size:12px;line-height:15px;padding-left:3px;font-weight:bold;">-13.2</div>
<div class="t" style="left:986.6px;top:366.22px;font-size:11px;line-height:11px;transform:scaleX(0.9132);transform-origin:0 0;">msec</div>
<div class="t" style="left:852.5px;top:383.82px;font-size:11px;line-height:11px;transform:scaleX(0.9034);transform-origin:0 0;">Error(1 sigma)</div>
<div class="t" style="left:920.6px;top:383.34px;font-size:12px;line-height:12px;font-weight:bold;transform:scaleX(1.0183);transform-origin:0 0;">+/-</div>
<div class="ed" style="left:936px;top:377px;width:40px;height:15px;background:#fff;font-size:12px;line-height:15px;padding-left:3px;font-weight:bold;">23.0</div>
<div class="t" style="left:986.6px;top:384.22px;font-size:11px;line-height:11px;transform:scaleX(0.9132);transform-origin:0 0;">msec</div>
<div class="a" style="left:852px;top:400px;width:169px;height:1px;background:#a9c9ea;"></div>
<div class="t" style="left:852.5px;top:404.54px;font-size:12px;line-height:12px;font-weight:bold;transform:scaleX(0.9907);transform-origin:0 0;">Component 2   [Double Star]</div>
<div class="t" style="left:860.9px;top:423.62px;font-size:11px;line-height:11px;transform:scaleX(0.9636);transform-origin:0 0;">Offset Time</div>
<div class="t" style="left:924.6px;top:423.54px;font-size:12px;line-height:12px;font-weight:bold;transform:scaleX(0.8562);transform-origin:0 0;">+</div>
<div class="ed" style="left:936px;top:418px;width:29px;height:15px;background:#fff;font-size:11px;line-height:15px;padding-left:3px;"></div>
<div class="t" style="left:972.3px;top:423.62px;font-size:11px;line-height:11px;transform:scaleX(0.9373);transform-origin:0 0;">millisecond</div>
<div class="grp" style="left:845px;top:448px;width:181px;height:44px;"></div>
<div class="a" style="left:849px;top:446px;width:148px;height:5px;background:#f0f0f0;"></div>
<div class="t" style="left:852.5px;top:443.04px;font-size:12px;line-height:12px;font-weight:bold;">Speed of Fresnel Pattern</div>
<div class="t" style="left:852.5px;top:458.62px;font-size:11px;line-height:11px;transform:scaleX(0.9468);transform-origin:0 0;">Rate</div>
<div class="t" style="left:931.6px;top:458.62px;font-size:11px;line-height:11px;transform:scaleX(0.9723);transform-origin:0 0;">Contact Angle</div>
<div class="ed" style="left:852px;top:470px;width:44px;height:16px;background:#fff;font-size:12px;line-height:16px;padding-left:3px;font-weight:bold;">0.1520</div>
<div class="ed" style="left:932px;top:470px;width:44px;height:16px;background:#fff;font-size:12px;line-height:16px;padding-left:3px;font-weight:bold;">81.3</div>
<div class="t" style="left:988.6px;top:478.92px;font-size:11px;line-height:11px;transform:scaleX(0.9459);transform-origin:0 0;">degree</div>
<div class="grp" style="left:845px;top:500px;width:181px;height:65px;"></div>
<div class="a" style="left:849px;top:498px;width:148px;height:5px;background:#f0f0f0;"></div>
<div class="chk" style="left:852px;top:497px;width:9px;height:9px;"></div>
<div class="t" style="left:870.8px;top:497.24px;font-size:12px;line-height:12px;font-weight:bold;transform:scaleX(0.9811);transform-origin:0 0;">Double Star Analyzing</div>
<div class="t" style="left:852.5px;top:512.72px;font-size:11px;line-height:11px;transform:scaleX(0.9636);transform-origin:0 0;">Step Hight</div>
<div class="t" style="left:941.1px;top:512.72px;font-size:11px;line-height:11px;transform:scaleX(0.9645);transform-origin:0 0;">Time Difference</div>
<div class="btn" style="left:853px;top:527px;width:14px;height:10px;"><span style="font-size:12px;"><svg width="7" height="4" viewBox="0 0 7 4"><path d="M0 4 L3.5 0 L7 4Z" fill="#a8a8a8"/></svg></span></div>
<div class="btn" style="left:853px;top:539px;width:14px;height:11px;"><span style="font-size:12px;"><svg width="7" height="4" viewBox="0 0 7 4"><path d="M0 0 L3.5 4 L7 0Z" fill="#a8a8a8"/></svg></span></div>
<div class="btn" style="left:870px;top:527px;width:14px;height:10px;"><span style="font-size:12px;"><svg width="7" height="4" viewBox="0 0 7 4"><path d="M0 4 L3.5 0 L7 4Z" fill="#a8a8a8"/></svg></span></div>
<div class="btn" style="left:870px;top:539px;width:14px;height:11px;"><span style="font-size:12px;"><svg width="7" height="4" viewBox="0 0 7 4"><path d="M0 0 L3.5 4 L7 0Z" fill="#a8a8a8"/></svg></span></div>
<div class="ed" style="left:885px;top:527px;width:25px;height:16px;background:#fff;font-size:11px;line-height:16px;padding-left:1px;color:#a0a0a0;">50.0</div>
<div class="t" style="left:909.3px;top:545.7px;font-size:10px;line-height:10px;">%</div>
<div class="t" style="left:857.3px;top:552.42px;font-size:11px;line-height:11px;">1</div>
<div class="t" style="left:870.8px;top:552.42px;font-size:11px;line-height:11px;transform:scaleX(0.9155);transform-origin:0 0;">0.1</div>
<div class="btn" style="left:924px;top:527px;width:14px;height:10px;"><span style="font-size:12px;"><svg width="7" height="4" viewBox="0 0 7 4"><path d="M0 4 L3.5 0 L7 4Z" fill="#a8a8a8"/></svg></span></div>
<div class="btn" style="left:924px;top:539px;width:14px;height:11px;"><span style="font-size:12px;"><svg width="7" height="4" viewBox="0 0 7 4"><path d="M0 0 L3.5 4 L7 0Z" fill="#a8a8a8"/></svg></span></div>
<div class="btn" style="left:941px;top:527px;width:14px;height:10px;"><span style="font-size:12px;"><svg width="7" height="4" viewBox="0 0 7 4"><path d="M0 4 L3.5 0 L7 4Z" fill="#a8a8a8"/></svg></span></div>
<div class="btn" style="left:941px;top:539px;width:14px;height:11px;"><span style="font-size:12px;"><svg width="7" height="4" viewBox="0 0 7 4"><path d="M0 0 L3.5 4 L7 0Z" fill="#a8a8a8"/></svg></span></div>
<div class="btn" style="left:957px;top:527px;width:14px;height:10px;"><span style="font-size:12px;"><svg width="7" height="4" viewBox="0 0 7 4"><path d="M0 4 L3.5 0 L7 4Z" fill="#a8a8a8"/></svg></span></div>
<div class="btn" style="left:957px;top:539px;width:14px;height:11px;"><span style="font-size:12px;"><svg width="7" height="4" viewBox="0 0 7 4"><path d="M0 0 L3.5 4 L7 0Z" fill="#a8a8a8"/></svg></span></div>
<div class="ed" style="left:973px;top:527px;width:43px;height:16px;background:#fff;font-size:11px;line-height:16px;padding-left:2px;color:#a0a0a0;">0</div>
<div class="t" style="left:973px;top:548.82px;font-size:11px;line-height:11px;transform:scaleX(0.9189);transform-origin:0 0;">millisecond</div>
<div class="grp" style="left:845px;top:572px;width:181px;height:52px;"></div>
<div class="a" style="left:849px;top:570px;width:162px;height:5px;background:#f0f0f0;"></div>
<div class="chk" style="left:853px;top:569px;width:9px;height:9px;"><svg width="9" height="9" viewBox="0 0 9 9" style="position:absolute;left:0px;top:0px"><path d="M1.4 3.6 L3.2 6 L6.6 1.6" stroke="#000" stroke-width="1.9" fill="none" stroke-linecap="square"/></svg></div>
<div class="t" style="left:872.8px;top:569.54px;font-size:12px;line-height:12px;font-weight:bold;transform:scaleX(0.9736);transform-origin:0 0;">Star's Angular Diameter</div>
<div class="btn" style="left:853px;top:584px;width:13px;height:9px;"><span style="font-size:12px;"><svg width="7" height="4" viewBox="0 0 7 4"><path d="M0 4 L3.5 0 L7 4Z" fill="#a8a8a8"/></svg></span></div>
<div class="btn" style="left:853px;top:595px;width:13px;height:10px;"><span style="font-size:12px;"><svg width="7" height="4" viewBox="0 0 7 4"><path d="M0 0 L3.5 4 L7 0Z" fill="#a8a8a8"/></svg></span></div>
<div class="ed" style="left:870px;top:584px;width:27px;height:15px;background:#fff;font-size:11px;line-height:15px;padding-left:2px;color:#a0a0a0;">0.2</div>
<div class="t" style="left:901.6px;top:588.92px;font-size:11px;line-height:11px;transform:scaleX(0.9419);transform-origin:0 0;">milli arc second</div>
<div class="t" style="left:861.6px;top:611.72px;font-size:11px;line-height:11px;transform:scaleX(0.9645);transform-origin:0 0;">Intensity at event centre:</div>
<div class="ed" style="left:981px;top:603px;width:28px;height:15px;background:#fff;font-size:13px;line-height:15px;padding-left:2px;color:#909090;">30.3</div>
<div class="t" style="left:1014px;top:611.12px;font-size:11px;line-height:11px;">%</div>
<div class="grp" style="left:845px;top:632px;width:181px;height:48px;"></div>
<div class="a" style="left:849px;top:630px;width:70px;height:5px;background:#f0f0f0;"></div>
<div class="t" style="left:852.5px;top:627.84px;font-size:12px;line-height:12px;font-weight:bold;transform:scaleX(0.9506);transform-origin:0 0;">Processing</div>
<svg class="a" style="left:853px;top:643px" width="11" height="11" viewBox="0 0 12 12"><circle cx="6" cy="6" r="5" fill="#fff"/><path d="M2.1 9.9 A5.5 5.5 0 0 1 9.9 2.1" stroke="#888" stroke-width="1.2" fill="none"/><path d="M9.9 2.1 A5.5 5.5 0 0 1 2.1 9.9" stroke="#f4f4f4" stroke-width="1.1" fill="none"/><path d="M2.9 9.1 A4.4 4.4 0 0 1 9.1 2.9" stroke="#3a3a3a" stroke-width="1" fill="none"/><path d="M9.1 2.9 A4.4 4.4 0 0 1 2.9 9.1" stroke="#dcdcdc" stroke-width="0.9" fill="none"/></svg>
<div class="t" style="left:870.6px;top:644.22px;font-size:11px;line-height:11px;transform:scaleX(0.9672);transform-origin:0 0;">for Occultation</div>
<svg class="a" style="left:950px;top:643px" width="11" height="11" viewBox="0 0 12 12"><circle cx="6" cy="6" r="5" fill="#fff"/><path d="M2.1 9.9 A5.5 5.5 0 0 1 9.9 2.1" stroke="#888" stroke-width="1.2" fill="none"/><path d="M9.9 2.1 A5.5 5.5 0 0 1 2.1 9.9" stroke="#f4f4f4" stroke-width="1.1" fill="none"/><path d="M2.9 9.1 A4.4 4.4 0 0 1 9.1 2.9" stroke="#3a3a3a" stroke-width="1" fill="none"/><path d="M9.1 2.9 A4.4 4.4 0 0 1 2.9 9.1" stroke="#dcdcdc" stroke-width="0.9" fill="none"/><circle cx="6" cy="6" r="1.9" fill="#000"/></svg>
<div class="t" style="left:966.3px;top:644.22px;font-size:11px;line-height:11px;transform:scaleX(0.9391);transform-origin:0 0;">for Grazing</div>
<div class="t" style="left:850.7px;top:664.12px;font-size:11px;line-height:11px;transform:scaleX(0.9279);transform-origin:0 0;">Sum-Squared Error</div>
<div class="ed" style="left:942px;top:659px;width:76px;height:15px;background:#fff;font-size:12px;line-height:15px;padding-left:3px;font-weight:bold;">98954427</div>
<div class="chk" style="left:846px;top:690px;width:9px;height:9px;"></div>
<div class="t" style="left:864.2px;top:690.82px;font-size:11px;line-height:11px;transform:scaleX(0.9640);transform-origin:0 0;">Mag drop</div>
<div class="ed" style="left:914px;top:687px;width:36px;height:15px;background:#fff;font-size:11px;line-height:15px;padding-left:3px;">10.6</div>
<div class="t" style="left:960.4px;top:690.82px;font-size:11px;line-height:11px;transform:scaleX(0.9588);transform-origin:0 0;">considered</div>
<div class="a" style="left:848px;top:708px;width:175px;height:7px;border:1px solid;border-color:#a0a0a0 #fff #fff #a0a0a0;background:#f0f0f0"></div>
<div class="btn" style="left:848px;top:720px;width:175px;height:23px;"><span style="font-size:12px;"></span></div>
<div class="t" style="left:872.8px;top:726.24px;font-size:12px;line-height:12px;font-weight:bold;transform:scaleX(0.9846);transform-origin:0 0;">Fit to Diffraction Curve</div>
<div class="chk" style="left:852px;top:753px;width:9px;height:9px;"><svg width="9" height="9" viewBox="0 0 9 9" style="position:absolute;left:0px;top:0px"><path d="M1.4 3.6 L3.2 6 L6.6 1.6" stroke="#000" stroke-width="1.9" fill="none" stroke-linecap="square"/></svg></div>
<div class="t" style="left:870.2px;top:753.82px;font-size:11px;line-height:11px;transform:scaleX(0.9694);transform-origin:0 0;">Pop up</div>
<div class="btn" style="left:908px;top:748px;width:113px;height:20px;"><span style="font-size:12px;"></span></div>
<div class="t" style="left:921.9px;top:753.34px;font-size:12px;line-height:12px;font-weight:bold;transform:scaleX(0.9811);transform-origin:0 0;">Magnitude Calc</div>
<div class="a" style="left:845px;top:771px;width:184px;height:1px;background:#fff;border-bottom:1px solid #a8a8a8"></div>
<div class="chk" style="left:892px;top:781px;width:9px;height:9px;"></div>
<div class="t" style="left:910.5px;top:780.72px;font-size:11px;line-height:11px;transform:scaleX(0.9576);transform-origin:0 0;">More</div>
<div class="win" style="left:1042px;top:14px;width:465px;height:858px;box-shadow:0 6px 20px rgba(0,0,0,0.45)"></div>
<div class="a" style="left:1043px;top:15px;width:465px;height:29px;background:#f3f3f3;border-radius:8px 8px 0 0"></div>
<svg class="a" style="left:1050px;top:20px" width="16" height="16" viewBox="0 0 16 16"><path d="M0 0.5 H3.5 L4 0 H16 V16 H14.5 L14 15 H3 L1 14 L0 13 Z" fill="#000080"/><path d="M0 2 L3 1.5 L3.5 6 L1 8 L0 7Z M7 2 L10 3 L9 7 L7 6Z M12 10 L16 9.5 L16 16 L14 13Z M1 10 L3 10 L4 13 L1 13Z" fill="#0000ff"/><rect x="4" y="1" width="2.1" height="13" fill="#ffff00"/><rect x="0" y="8" width="16" height="1.2" fill="#ffff00"/><path d="M5 5.9 L8.5 8.6 L5 11.6 L1.9 8.6Z" fill="#ffff00"/><rect x="0.9" y="1.6999999999999997" width="1.2" height="1.2" fill="#e8e8ff"/><rect x="9.9" y="0.9" width="1.2" height="1.2" fill="#e8e8ff"/><rect x="12.0" y="0.9" width="1.2" height="1.2" fill="#e8e8ff"/><rect x="13.9" y="1.9" width="1.2" height="1.2" fill="#e8e8ff"/><rect x="1.0" y="11.9" width="1.2" height="1.2" fill="#e8e8ff"/><rect x="1.9" y="12.8" width="1.2" height="1.2" fill="#e8e8ff"/><rect x="6.0" y="13.700000000000001" width="1.2" height="1.2" fill="#e8e8ff"/><rect x="7.800000000000001" y="12.8" width="1.2" height="1.2" fill="#e8e8ff"/><rect x="9.9" y="12.8" width="1.2" height="1.2" fill="#e8e8ff"/><rect x="12.0" y="11.8" width="1.2" height="1.2" fill="#e8e8ff"/><rect x="13.9" y="12.8" width="1.2" height="1.2" fill="#e8e8ff"/></svg>
<div class="t" style="left:1071px;top:22.76px;font-size:13px;line-height:13px;color:#1a1a1a;transform:scaleX(0.9342);transform-origin:0 0;">Magnitude &amp; Event time Calculator</div>
<svg class="a" style="left:1386px;top:20px" width="110" height="16" viewBox="0 0 110 16"><path d="M6 8 H16" stroke="#222" stroke-width="1"/><rect x="48.5" y="2.5" width="10" height="10" fill="none" stroke="#222" stroke-width="1"/><path d="M94.5 2.5 L105.5 13.5 M105.5 2.5 L94.5 13.5" stroke="#222" stroke-width="1"/></svg>
<div class="grp" style="left:1043px;top:50px;width:140px;height:37px;"></div>
<div class="a" style="left:1049px;top:48px;width:125px;height:5px;background:#f0f0f0;"></div>
<div class="t" style="left:1050.5px;top:45.44px;font-size:12px;line-height:12px;font-weight:bold;transform:scaleX(0.9783);transform-origin:0 0;">Selection for analysis</div>
<svg class="a" style="left:1051px;top:59px" width="11" height="11" viewBox="0 0 12 12"><circle cx="6" cy="6" r="5" fill="#fff"/><path d="M2.1 9.9 A5.5 5.5 0 0 1 9.9 2.1" stroke="#888" stroke-width="1.2" fill="none"/><path d="M9.9 2.1 A5.5 5.5 0 0 1 2.1 9.9" stroke="#f4f4f4" stroke-width="1.1" fill="none"/><path d="M2.9 9.1 A4.4 4.4 0 0 1 9.1 2.9" stroke="#3a3a3a" stroke-width="1" fill="none"/><path d="M9.1 2.9 A4.4 4.4 0 0 1 2.9 9.1" stroke="#dcdcdc" stroke-width="0.9" fill="none"/><circle cx="6" cy="6" r="1.9" fill="#000"/></svg>
<div class="t" style="left:1068.8px;top:59.14px;font-size:12px;line-height:12px;font-weight:bold;transform:scaleX(0.9417);transform-origin:0 0;">Timing only</div>
<svg class="a" style="left:1051px;top:73px" width="11" height="11" viewBox="0 0 12 12"><circle cx="6" cy="6" r="5" fill="#fff"/><path d="M2.1 9.9 A5.5 5.5 0 0 1 9.9 2.1" stroke="#888" stroke-width="1.2" fill="none"/><path d="M9.9 2.1 A5.5 5.5 0 0 1 2.1 9.9" stroke="#f4f4f4" stroke-width="1.1" fill="none"/><path d="M2.9 9.1 A4.4 4.4 0 0 1 9.1 2.9" stroke="#3a3a3a" stroke-width="1" fill="none"/><path d="M9.1 2.9 A4.4 4.4 0 0 1 2.9 9.1" stroke="#dcdcdc" stroke-width="0.9" fill="none"/></svg>
<div class="t" style="left:1068.8px;top:73.14px;font-size:12px;line-height:12px;font-weight:bold;transform:scaleX(0.9761);transform-origin:0 0;">Doublestar and time</div>
<div class="t" style="left:1110.3px;top:94.48px;font-size:14px;line-height:14px;transform:scaleX(1.1703);transform-origin:0 0;">First Event</div>
<div class="t" style="left:1090.4px;top:118.28px;font-size:14px;line-height:14px;transform:scaleX(1.1540);transform-origin:0 0;">Second Event</div>
<div class="t" style="left:1122.7px;top:144.74px;font-size:12px;line-height:12px;font-weight:bold;transform:scaleX(0.9802);transform-origin:0 0;">Combined</div>
<div class="grp" style="left:1192px;top:50px;width:140px;height:115px;"></div>
<div class="a" style="left:1198px;top:48px;width:117px;height:5px;background:#f0f0f0;"></div>
<div class="t" style="left:1200.7px;top:45.44px;font-size:12px;line-height:12px;font-weight:bold;transform:scaleX(0.9765);transform-origin:0 0;">Statistic Calculation</div>
<div class="t" style="left:1212px;top:58.68px;font-size:14px;line-height:14px;transform:scaleX(1.0280);transform-origin:0 0;">Luminous Intensity</div>
<div class="t" style="left:1208.8px;top:73.02px;font-size:11px;line-height:11px;transform:scaleX(0.9908);transform-origin:0 0;">Average</div>
<div class="t" style="left:1267px;top:73.02px;font-size:11px;line-height:11px;">Error Margin</div>
<div class="ed" style="left:1202px;top:86px;width:44px;height:16px;background:#fff;font-size:13px;line-height:16px;padding-left:2px;font-weight:bold;">3016.9</div>
<div class="t" style="left:1254.9px;top:92.24px;font-size:12px;line-height:12px;font-weight:bold;transform:scaleX(1.3949);transform-origin:0 0;">+/-</div>
<div class="ed" style="left:1281px;top:86px;width:37px;height:16px;background:#fff;font-size:13px;line-height:16px;padding-left:2px;font-weight:bold;">84.6</div>
<div class="ed" style="left:1202px;top:109px;width:44px;height:16px;background:#fff;font-size:13px;line-height:16px;padding-left:2px;font-weight:bold;">2979.9</div>
<div class="t" style="left:1254.9px;top:115.24px;font-size:12px;line-height:12px;font-weight:bold;transform:scaleX(1.3949);transform-origin:0 0;">+/-</div>
<div class="ed" style="left:1281px;top:109px;width:37px;height:16px;background:#fff;font-size:13px;line-height:16px;padding-left:2px;font-weight:bold;">164.6</div>
<div class="ed" style="left:1202px;top:140px;width:44px;height:16px;background:#fff;font-size:13px;line-height:16px;padding-left:2px;font-weight:bold;">5996.7</div>
<div class="t" style="left:1254.9px;top:146.24px;font-size:12px;line-height:12px;font-weight:bold;transform:scaleX(1.3949);transform-origin:0 0;">+/-</div>
<div class="ed" style="left:1281px;top:140px;width:37px;height:16px;background:#fff;font-size:13px;line-height:16px;padding-left:2px;font-weight:bold;">249.1</div>
<div class="a" style="left:1050px;top:175px;width:225px;height:1px;background:#99c8f0;"></div>
<div class="grp" style="left:1343px;top:50px;width:140px;height:80px;"></div>
<div class="a" style="left:1349px;top:48px;width:62px;height:5px;background:#f0f0f0;"></div>
<div class="t" style="left:1350.5px;top:45.44px;font-size:12px;line-height:12px;font-weight:bold;transform:scaleX(0.9390);transform-origin:0 0;">Estimation</div>
<div class="t" style="left:1365.3px;top:60.1px;font-size:15px;line-height:15px;font-weight:bold;transform:scaleX(0.9427);transform-origin:0 0;">Magnitude</div>
<div class="t" style="left:1360.5px;top:73.02px;font-size:11px;line-height:11px;transform:scaleX(0.9200);transform-origin:0 0;">Mag.</div>
<div class="t" style="left:1416.2px;top:73.02px;font-size:11px;line-height:11px;transform:scaleX(1.0176);transform-origin:0 0;">Error Margin</div>
<div class="ed" style="left:1358px;top:86px;width:36px;height:16px;background:#fff;font-size:13px;line-height:16px;padding-left:2px;font-weight:bold;">8.65</div>
<div class="t" style="left:1403.8px;top:90.74px;font-size:12px;line-height:12px;font-weight:bold;transform:scaleX(1.4298);transform-origin:0 0;">+/-</div>
<div class="ed" style="left:1430px;top:86px;width:36px;height:16px;background:#fff;font-size:13px;line-height:16px;padding-left:2px;font-weight:bold;">0.05</div>
<div class="ed" style="left:1358px;top:109px;width:36px;height:16px;background:#fff;font-size:13px;line-height:16px;padding-left:2px;font-weight:bold;">8.66</div>
<div class="t" style="left:1403.8px;top:113.74px;font-size:12px;line-height:12px;font-weight:bold;transform:scaleX(1.4298);transform-origin:0 0;">+/-</div>
<div class="ed" style="left:1430px;top:109px;width:36px;height:16px;background:#fff;font-size:13px;line-height:16px;padding-left:2px;font-weight:bold;">0.07</div>
<div class="t" style="left:1340.8px;top:135.34px;font-size:12px;line-height:12px;font-weight:bold;transform:scaleX(1.0332);transform-origin:0 0;">Assuming Pair's Mag. as:</div>
<div class="ed" style="left:1356px;top:152px;width:36px;height:14px;background:#fff;font-size:12px;line-height:14px;padding-left:2px;font-weight:bold;">7.90</div>
<div class="btn" style="left:1396px;top:149px;width:14px;height:9px;"><span style="font-size:12px;"><svg width="7" height="4" viewBox="0 0 7 4"><path d="M0 4 L3.5 0 L7 4Z" fill="#000"/></svg></span></div>
<div class="btn" style="left:1396px;top:162px;width:14px;height:9px;"><span style="font-size:12px;"><svg width="7" height="4" viewBox="0 0 7 4"><path d="M0 0 L3.5 4 L7 0Z" fill="#000"/></svg></span></div>
<div class="btn" style="left:1412px;top:149px;width:14px;height:9px;"><span style="font-size:12px;"><svg width="7" height="4" viewBox="0 0 7 4"><path d="M0 4 L3.5 0 L7 4Z" fill="#000"/></svg></span></div>
<div class="btn" style="left:1412px;top:162px;width:14px;height:9px;"><span style="font-size:12px;"><svg width="7" height="4" viewBox="0 0 7 4"><path d="M0 0 L3.5 4 L7 0Z" fill="#000"/></svg></span></div>
<div class="btn" style="left:1428px;top:149px;width:14px;height:9px;"><span style="font-size:12px;"><svg width="7" height="4" viewBox="0 0 7 4"><path d="M0 4 L3.5 0 L7 4Z" fill="#000"/></svg></span></div>
<div class="btn" style="left:1428px;top:162px;width:14px;height:9px;"><span style="font-size:12px;"><svg width="7" height="4" viewBox="0 0 7 4"><path d="M0 0 L3.5 4 L7 0Z" fill="#000"/></svg></span></div>
<div class="btn" style="left:1298px;top:179px;width:199px;height:17px;"><span style="font-size:12px;"></span></div>
<div class="t" style="left:1309.6px;top:182.34px;font-size:12px;line-height:12px;font-weight:bold;transform:scaleX(0.9835);transform-origin:0 0;">Add doublestar result to Report</div>
<div class="a" style="left:1289px;top:199px;width:210px;height:1px;background:#99c8f0;"></div>
<div class="grp" style="left:1044px;top:188px;width:236px;height:110px;"></div>
<div class="a" style="left:1049px;top:186px;width:173px;height:5px;background:#f0f0f0;"></div>
<div class="t" style="left:1050.5px;top:183.72px;font-size:11px;line-height:11px;transform:scaleX(0.9688);transform-origin:0 0;">Select the BaseTime for Event Time</div>
<div class="t" style="left:1062.6px;top:203.52px;font-size:11px;line-height:11px;transform:scaleX(0.9460);transform-origin:0 0;">Selected frame (Base) : No.</div>
<div class="ed" style="left:1199px;top:198px;width:73px;height:15px;background:#fff;font-size:12px;line-height:15px;padding-left:3px;"></div>
<svg class="a" style="left:1059px;top:221px" width="11" height="11" viewBox="0 0 12 12"><circle cx="6" cy="6" r="5" fill="#fff"/><path d="M2.1 9.9 A5.5 5.5 0 0 1 9.9 2.1" stroke="#888" stroke-width="1.2" fill="none"/><path d="M9.9 2.1 A5.5 5.5 0 0 1 2.1 9.9" stroke="#f4f4f4" stroke-width="1.1" fill="none"/><path d="M2.9 9.1 A4.4 4.4 0 0 1 9.1 2.9" stroke="#3a3a3a" stroke-width="1" fill="none"/><path d="M9.1 2.9 A4.4 4.4 0 0 1 2.9 9.1" stroke="#dcdcdc" stroke-width="0.9" fill="none"/><circle cx="6" cy="6" r="1.9" fill="#000"/></svg>
<div class="t" style="left:1076.3px;top:220.42px;font-size:11px;line-height:11px;transform:scaleX(0.9188);transform-origin:0 0;">First field</div>
<svg class="a" style="left:1147px;top:221px" width="11" height="11" viewBox="0 0 12 12"><circle cx="6" cy="6" r="5" fill="#fff"/><path d="M2.1 9.9 A5.5 5.5 0 0 1 9.9 2.1" stroke="#888" stroke-width="1.2" fill="none"/><path d="M9.9 2.1 A5.5 5.5 0 0 1 2.1 9.9" stroke="#f4f4f4" stroke-width="1.1" fill="none"/><path d="M2.9 9.1 A4.4 4.4 0 0 1 9.1 2.9" stroke="#3a3a3a" stroke-width="1" fill="none"/><path d="M9.1 2.9 A4.4 4.4 0 0 1 2.9 9.1" stroke="#dcdcdc" stroke-width="0.9" fill="none"/></svg>
<div class="t" style="left:1164.4px;top:220.42px;font-size:11px;line-height:11px;transform:scaleX(0.9744);transform-origin:0 0;">Second field</div>
<div class="t" style="left:1250.3px;top:219.62px;font-size:11px;line-height:11px;transform:scaleX(0.9420);transform-origin:0 0;">Graph</div>
<div class="ed" style="left:1058px;top:237px;width:15px;height:16px;background:#fff;font-size:11px;line-height:16px;padding-left:1px;">20</div>
<div class="ed" style="left:1078px;top:237px;width:15px;height:16px;background:#fff;font-size:11px;line-height:16px;padding-left:1px;">11</div>
<div class="ed" style="left:1098px;top:237px;width:43px;height:16px;background:#fff;font-size:11px;line-height:16px;padding-left:1px;">2.8854</div>
<div class="ed" style="left:1162px;top:237px;width:15px;height:16px;background:#fff;font-size:11px;line-height:16px;padding-left:1px;">20</div>
<div class="ed" style="left:1182px;top:237px;width:15px;height:16px;background:#fff;font-size:11px;line-height:16px;padding-left:1px;">11</div>
<div class="ed" style="left:1202px;top:237px;width:43px;height:16px;background:#fff;font-size:11px;line-height:16px;padding-left:1px;">2.9027</div>
<div class="btn" style="left:1258px;top:234px;width:15px;height:19px;"><span style="font-size:12px;"><svg width="11" height="10" viewBox="0 0 11 10"><path d="M0 10 L5.5 0 L11 10Z" fill="#000"/></svg></span></div>
<div class="btn" style="left:1258px;top:258px;width:15px;height:20px;"><span style="font-size:12px;"><svg width="11" height="10" viewBox="0 0 11 10"><path d="M0 0 L5.5 10 L11 0Z" fill="#000"/></svg></span></div>
<div class="btn" style="left:1050px;top:262px;width:199px;height:15px;"><span style="font-size:12px;"></span></div>
<div class="t" style="left:1060.2px;top:264.92px;font-size:11px;line-height:11px;transform:scaleX(0.9609);transform-origin:0 0;">Apply the edit time and Re-open graph</div>
<div class="btn" style="left:1050px;top:281px;width:199px;height:15px;"><span style="font-size:12px;"></span></div>
<div class="t" style="left:1057px;top:283.82px;font-size:11px;line-height:11px;transform:scaleX(0.9441);transform-origin:0 0;">Re-read  Time Stamp from current frame</div>
<div class="t" style="left:1255.2px;top:283.02px;font-size:11px;line-height:11px;transform:scaleX(0.9153);transform-origin:0 0;">Time</div>
<div class="t" style="left:1290.2px;top:205.92px;font-size:11px;line-height:11px;transform:scaleX(0.9790);transform-origin:0 0;">Integrated</div>
<div class="t" style="left:1290.2px;top:217.72px;font-size:11px;line-height:11px;transform:scaleX(0.9280);transform-origin:0 0;">frames</div>
<div class="ed" style="left:1346px;top:212px;width:28px;height:16px;background:#fff;font-size:11px;line-height:16px;padding-left:2px;">0</div>
<div class="btn" style="left:1378px;top:211px;width:15px;height:10px;"><span style="font-size:12px;"><svg width="7" height="4" viewBox="0 0 7 4"><path d="M0 4 L3.5 0 L7 4Z" fill="#000"/></svg></span></div>
<div class="btn" style="left:1378px;top:223px;width:15px;height:10px;"><span style="font-size:12px;"><svg width="7" height="4" viewBox="0 0 7 4"><path d="M0 0 L3.5 4 L7 0Z" fill="#000"/></svg></span></div>
<div class="t" style="left:1402.5px;top:213.22px;font-size:11px;line-height:11px;transform:scaleX(0.9379);transform-origin:0 0;">Digits</div>
<div class="ed" style="left:1434px;top:212px;width:20px;height:16px;background:#fff;font-size:11px;line-height:16px;padding-left:2px;">3</div>
<div class="btn" style="left:1458px;top:211px;width:15px;height:10px;"><span style="font-size:12px;"><svg width="7" height="4" viewBox="0 0 7 4"><path d="M0 4 L3.5 0 L7 4Z" fill="#000"/></svg></span></div>
<div class="btn" style="left:1458px;top:223px;width:15px;height:10px;"><span style="font-size:12px;"><svg width="7" height="4" viewBox="0 0 7 4"><path d="M0 0 L3.5 4 L7 0Z" fill="#000"/></svg></span></div>
<div class="chk" style="left:1290px;top:243px;width:9px;height:9px;"></div>
<div class="t" style="left:1308.4px;top:243.12px;font-size:11px;line-height:11px;transform:scaleX(0.9445);transform-origin:0 0;">Consider step hight for time estimation</div>
<div class="grp" style="left:1289px;top:265px;width:215px;height:43px;"></div>
<div class="a" style="left:1295px;top:263px;width:150px;height:5px;background:#f0f0f0;"></div>
<div class="t" style="left:1297.5px;top:260.34px;font-size:12px;line-height:12px;font-weight:bold;transform:scaleX(0.9850);transform-origin:0 0;">Calculation for event time</div>
<svg class="a" style="left:1300px;top:277px" width="11" height="11" viewBox="0 0 12 12"><circle cx="6" cy="6" r="5" fill="#fff"/><path d="M2.1 9.9 A5.5 5.5 0 0 1 9.9 2.1" stroke="#888" stroke-width="1.2" fill="none"/><path d="M9.9 2.1 A5.5 5.5 0 0 1 2.1 9.9" stroke="#f4f4f4" stroke-width="1.1" fill="none"/><path d="M2.9 9.1 A4.4 4.4 0 0 1 9.1 2.9" stroke="#3a3a3a" stroke-width="1" fill="none"/><path d="M9.1 2.9 A4.4 4.4 0 0 1 2.9 9.1" stroke="#dcdcdc" stroke-width="0.9" fill="none"/></svg>
<div class="t" style="left:1317.3px;top:277.52px;font-size:11px;line-height:11px;transform:scaleX(0.8183);transform-origin:0 0;">OFF</div>
<svg class="a" style="left:1346px;top:277px" width="11" height="11" viewBox="0 0 12 12"><circle cx="6" cy="6" r="5" fill="#fff"/><path d="M2.1 9.9 A5.5 5.5 0 0 1 9.9 2.1" stroke="#888" stroke-width="1.2" fill="none"/><path d="M9.9 2.1 A5.5 5.5 0 0 1 2.1 9.9" stroke="#f4f4f4" stroke-width="1.1" fill="none"/><path d="M2.9 9.1 A4.4 4.4 0 0 1 9.1 2.9" stroke="#3a3a3a" stroke-width="1" fill="none"/><path d="M9.1 2.9 A4.4 4.4 0 0 1 2.9 9.1" stroke="#dcdcdc" stroke-width="0.9" fill="none"/></svg>
<div class="t" style="left:1363.4px;top:277.52px;font-size:11px;line-height:11px;transform:scaleX(1.0098);transform-origin:0 0;">WAT120N</div>
<svg class="a" style="left:1426px;top:277px" width="11" height="11" viewBox="0 0 12 12"><circle cx="6" cy="6" r="5" fill="#fff"/><path d="M2.1 9.9 A5.5 5.5 0 0 1 9.9 2.1" stroke="#888" stroke-width="1.2" fill="none"/><path d="M9.9 2.1 A5.5 5.5 0 0 1 2.1 9.9" stroke="#f4f4f4" stroke-width="1.1" fill="none"/><path d="M2.9 9.1 A4.4 4.4 0 0 1 9.1 2.9" stroke="#3a3a3a" stroke-width="1" fill="none"/><path d="M9.1 2.9 A4.4 4.4 0 0 1 2.9 9.1" stroke="#dcdcdc" stroke-width="0.9" fill="none"/></svg>
<div class="t" style="left:1442.9px;top:277.52px;font-size:11px;line-height:11px;transform:scaleX(0.9832);transform-origin:0 0;">WAT910H&gt;</div>
<svg class="a" style="left:1345px;top:293px" width="11" height="11" viewBox="0 0 12 12"><circle cx="6" cy="6" r="5" fill="#fff"/><path d="M2.1 9.9 A5.5 5.5 0 0 1 9.9 2.1" stroke="#888" stroke-width="1.2" fill="none"/><path d="M9.9 2.1 A5.5 5.5 0 0 1 2.1 9.9" stroke="#f4f4f4" stroke-width="1.1" fill="none"/><path d="M2.9 9.1 A4.4 4.4 0 0 1 9.1 2.9" stroke="#3a3a3a" stroke-width="1" fill="none"/><path d="M9.1 2.9 A4.4 4.4 0 0 1 2.9 9.1" stroke="#dcdcdc" stroke-width="0.9" fill="none"/><circle cx="6" cy="6" r="1.9" fill="#000"/></svg>
<div class="t" style="left:1363.4px;top:293.04px;font-size:12px;line-height:12px;font-weight:bold;transform:scaleX(1.0172);transform-origin:0 0;">CMOS or WAT100N</div>
<div class="a" style="left:1043px;top:317px;width:461px;height:45px;background:#fff;border-style:solid;border-width:2px 1px 1px 2px;border-color:#a0a0a0 #fff #fff #a0a0a0"></div>
<div class="btn" style="left:1442px;top:349px;width:63px;height:22px;"><span style="font-size:11px;">-&gt; Clip brd.</span></div>
<div class="a" style="left:1044px;top:378px;width:460px;height:256px;background:#f0f0f0;border-style:solid;border-width:2px 1px 1px 2px;border-color:#a0a0a0 #fff #fff #a0a0a0"></div>
<div class="a" style="left:1046px;top:380px;width:443px;height:239px;background:#fff;"></div>
<div class="a" style="left:1489px;top:380px;width:16px;height:239px;background:#f0f0f0;"></div>
<svg class="a" style="left:1490px;top:384px" width="14" height="10"><path d="M3 8 L7 3 L11 8Z" fill="#a0a0a0"/></svg>
<svg class="a" style="left:1490px;top:604px" width="14" height="10"><path d="M3 2 L7 7 L11 2Z" fill="#a0a0a0"/></svg>
<div class="a" style="left:1063px;top:626px;width:381px;height:2px;background:#8a8a8a;"></div>
<div class="t" style="left:1051px;top:381.8px;font-family:&quot;Liberation Mono&quot;,monospace;font-size:16px;line-height:16px;transform:scaleX(0.8333);transform-origin:0 0">2025-11-7 / (2673)Lossignol / HIP 60938 V=7.96  R=6.90</div>
<div class="t" style="left:1051px;top:411.8px;font-family:&quot;Liberation Mono&quot;,monospace;font-size:16px;line-height:16px;transform:scaleX(0.8333);transform-origin:0 0">Event Time : 20h11m02.872s  +/- 0.030s  S/N=4.96</div>
<div class="t" style="left:1051px;top:426.8px;font-family:&quot;Liberation Mono&quot;,monospace;font-size:16px;line-height:16px;transform:scaleX(0.8333);transform-origin:0 0">Mag Drop (predicted): 10.6   Mag.</div>
<div class="t" style="left:1051px;top:441.8px;font-family:&quot;Liberation Mono&quot;,monospace;font-size:16px;line-height:16px;transform:scaleX(0.8333);transform-origin:0 0">Mag Drop (measured ):  3.56  Mag.</div>
<div class="t" style="left:1051px;top:471.8px;font-family:&quot;Liberation Mono&quot;,monospace;font-size:16px;line-height:16px;transform:scaleX(0.8333);transform-origin:0 0">-Statistical analysis of Light Intensity-</div>
<div class="t" style="left:1051px;top:486.8px;font-family:&quot;Liberation Mono&quot;,monospace;font-size:16px;line-height:16px;transform:scaleX(0.8333);transform-origin:0 0">Light intensity    Average   Stdv      n</div>
<div class="t" style="left:1051px;top:501.8px;font-family:&quot;Liberation Mono&quot;,monospace;font-size:16px;line-height:16px;transform:scaleX(0.8333);transform-origin:0 0">  Combined  :      6231.0   1209.4     54</div>
<div class="t" style="left:1051px;top:516.8px;font-family:&quot;Liberation Mono&quot;,monospace;font-size:16px;line-height:16px;transform:scaleX(0.8333);transform-origin:0 0">  Background:       234.2    223.8      7</div>
<div class="t" style="left:1051px;top:531.8px;font-family:&quot;Liberation Mono&quot;,monospace;font-size:16px;line-height:16px;transform:scaleX(0.8333);transform-origin:0 0">Noise Level (N/S)  Upper    Lower   (S/N)</div>
<div class="t" style="left:1051px;top:546.8px;font-family:&quot;Liberation Mono&quot;,monospace;font-size:16px;line-height:16px;transform:scaleX(0.8333);transform-origin:0 0">  First event:     0.0000   0.0742</div>
<div class="t" style="left:1051px;top:561.8px;font-family:&quot;Liberation Mono&quot;,monospace;font-size:16px;line-height:16px;transform:scaleX(0.8333);transform-origin:0 0">  Total event:     0.2017   0.0373   4.96</div>
<div class="t" style="left:1051px;top:576.8px;font-family:&quot;Liberation Mono&quot;,monospace;font-size:16px;line-height:16px;transform:scaleX(0.8333);transform-origin:0 0">3.31323</div>
<div class="grp" style="left:1044px;top:650px;width:174px;height:64px;"></div>
<div class="a" style="left:1051px;top:648px;width:86px;height:5px;background:#f0f0f0;"></div>
<div class="t" style="left:1052.9px;top:645.72px;font-size:11px;line-height:11px;transform:scaleX(0.9764);transform-origin:0 0;">Text out to Graph</div>
<svg class="a" style="left:1053px;top:661px" width="11" height="11" viewBox="0 0 12 12"><circle cx="6" cy="6" r="5" fill="#fff"/><path d="M2.1 9.9 A5.5 5.5 0 0 1 9.9 2.1" stroke="#888" stroke-width="1.2" fill="none"/><path d="M9.9 2.1 A5.5 5.5 0 0 1 2.1 9.9" stroke="#f4f4f4" stroke-width="1.1" fill="none"/><path d="M2.9 9.1 A4.4 4.4 0 0 1 9.1 2.9" stroke="#3a3a3a" stroke-width="1" fill="none"/><path d="M9.1 2.9 A4.4 4.4 0 0 1 2.9 9.1" stroke="#dcdcdc" stroke-width="0.9" fill="none"/></svg>
<div class="t" style="left:1070.7px;top:661.42px;font-size:11px;line-height:11px;transform:scaleX(0.8774);transform-origin:0 0;">OFF</div>
<svg class="a" style="left:1053px;top:679px" width="11" height="11" viewBox="0 0 12 12"><circle cx="6" cy="6" r="5" fill="#fff"/><path d="M2.1 9.9 A5.5 5.5 0 0 1 9.9 2.1" stroke="#888" stroke-width="1.2" fill="none"/><path d="M9.9 2.1 A5.5 5.5 0 0 1 2.1 9.9" stroke="#f4f4f4" stroke-width="1.1" fill="none"/><path d="M2.9 9.1 A4.4 4.4 0 0 1 9.1 2.9" stroke="#3a3a3a" stroke-width="1" fill="none"/><path d="M9.1 2.9 A4.4 4.4 0 0 1 2.9 9.1" stroke="#dcdcdc" stroke-width="0.9" fill="none"/><circle cx="6" cy="6" r="1.9" fill="#000"/></svg>
<div class="t" style="left:1070.7px;top:679.52px;font-size:11px;line-height:11px;transform:scaleX(0.9637);transform-origin:0 0;">Text with transparency BKG</div>
<svg class="a" style="left:1053px;top:697px" width="11" height="11" viewBox="0 0 12 12"><circle cx="6" cy="6" r="5" fill="#fff"/><path d="M2.1 9.9 A5.5 5.5 0 0 1 9.9 2.1" stroke="#888" stroke-width="1.2" fill="none"/><path d="M9.9 2.1 A5.5 5.5 0 0 1 2.1 9.9" stroke="#f4f4f4" stroke-width="1.1" fill="none"/><path d="M2.9 9.1 A4.4 4.4 0 0 1 9.1 2.9" stroke="#3a3a3a" stroke-width="1" fill="none"/><path d="M9.1 2.9 A4.4 4.4 0 0 1 2.9 9.1" stroke="#dcdcdc" stroke-width="0.9" fill="none"/></svg>
<div class="t" style="left:1070.7px;top:697.32px;font-size:11px;line-height:11px;transform:scaleX(0.9874);transform-origin:0 0;">Text with opaque background</div>
<div class="grp" style="left:1226px;top:650px;width:86px;height:64px;"></div>
<div class="a" style="left:1233px;top:648px;width:30px;height:5px;background:#f0f0f0;"></div>
<div class="t" style="left:1234.7px;top:645.72px;font-size:11px;line-height:11px;transform:scaleX(0.9558);transform-origin:0 0;">Mode</div>
<svg class="a" style="left:1235px;top:661px" width="11" height="11" viewBox="0 0 12 12"><circle cx="6" cy="6" r="5" fill="#fff"/><path d="M2.1 9.9 A5.5 5.5 0 0 1 9.9 2.1" stroke="#888" stroke-width="1.2" fill="none"/><path d="M9.9 2.1 A5.5 5.5 0 0 1 2.1 9.9" stroke="#f4f4f4" stroke-width="1.1" fill="none"/><path d="M2.9 9.1 A4.4 4.4 0 0 1 9.1 2.9" stroke="#3a3a3a" stroke-width="1" fill="none"/><path d="M9.1 2.9 A4.4 4.4 0 0 1 2.9 9.1" stroke="#dcdcdc" stroke-width="0.9" fill="none"/><circle cx="6" cy="6" r="1.9" fill="#000"/></svg>
<div class="t" style="left:1252.9px;top:661.42px;font-size:11px;line-height:11px;transform:scaleX(0.9153);transform-origin:0 0;">Time</div>
<svg class="a" style="left:1235px;top:679px" width="11" height="11" viewBox="0 0 12 12"><circle cx="6" cy="6" r="5" fill="#fff"/><path d="M2.1 9.9 A5.5 5.5 0 0 1 9.9 2.1" stroke="#888" stroke-width="1.2" fill="none"/><path d="M9.9 2.1 A5.5 5.5 0 0 1 2.1 9.9" stroke="#f4f4f4" stroke-width="1.1" fill="none"/><path d="M2.9 9.1 A4.4 4.4 0 0 1 9.1 2.9" stroke="#3a3a3a" stroke-width="1" fill="none"/><path d="M9.1 2.9 A4.4 4.4 0 0 1 2.9 9.1" stroke="#dcdcdc" stroke-width="0.9" fill="none"/></svg>
<div class="t" style="left:1252.4px;top:679.52px;font-size:11px;line-height:11px;transform:scaleX(0.9772);transform-origin:0 0;">Info. Right</div>
<svg class="a" style="left:1235px;top:697px" width="11" height="11" viewBox="0 0 12 12"><circle cx="6" cy="6" r="5" fill="#fff"/><path d="M2.1 9.9 A5.5 5.5 0 0 1 9.9 2.1" stroke="#888" stroke-width="1.2" fill="none"/><path d="M9.9 2.1 A5.5 5.5 0 0 1 2.1 9.9" stroke="#f4f4f4" stroke-width="1.1" fill="none"/><path d="M2.9 9.1 A4.4 4.4 0 0 1 9.1 2.9" stroke="#3a3a3a" stroke-width="1" fill="none"/><path d="M9.1 2.9 A4.4 4.4 0 0 1 2.9 9.1" stroke="#dcdcdc" stroke-width="0.9" fill="none"/></svg>
<div class="t" style="left:1252.4px;top:697.32px;font-size:11px;line-height:11px;transform:scaleX(0.9810);transform-origin:0 0;">Info. Left</div>
<div class="a" style="left:1321px;top:647px;width:162px;height:17px;background:repeating-conic-gradient(#e8e8e8 0 25%,#ffffff 0 50%) 0 0/2px 2px"></div>
<div class="btn" style="left:1321px;top:647px;width:16px;height:15px;"><span style="font-size:12px;"><svg width="6" height="8" viewBox="0 0 6 8"><path d="M5 0 L1 4 L5 8Z" fill="#000"/></svg></span></div>
<div class="btn" style="left:1466px;top:647px;width:15px;height:15px;"><span style="font-size:12px;"><svg width="6" height="8" viewBox="0 0 6 8"><path d="M1 0 L5 4 L1 8Z" fill="#000"/></svg></span></div>
<div class="btn" style="left:1403px;top:647px;width:15px;height:15px;"><span style="font-size:12px;"></span></div>
<div class="grp" style="left:1322px;top:673px;width:54px;height:41px;"></div>
<div class="a" style="left:1329px;top:671px;width:45px;height:5px;background:#f0f0f0;"></div>
<div class="t" style="left:1330.6px;top:669.62px;font-size:11px;line-height:11px;transform:scaleX(0.9321);transform-origin:0 0;">Font size</div>
<div class="btn" style="left:1330px;top:685px;width:14px;height:10px;"><span style="font-size:12px;"><svg width="7" height="4" viewBox="0 0 7 4"><path d="M0 4 L3.5 0 L7 4Z" fill="#000"/></svg></span></div>
<div class="btn" style="left:1330px;top:697px;width:14px;height:10px;"><span style="font-size:12px;"><svg width="7" height="4" viewBox="0 0 7 4"><path d="M0 0 L3.5 4 L7 0Z" fill="#000"/></svg></span></div>
<div class="ed" style="left:1347px;top:685px;width:19px;height:15px;background:#fff;font-size:11px;line-height:15px;padding-left:1px;">10</div>
<div class="ed" style="left:1389px;top:668px;width:93px;height:16px;background:#fff;font-size:11px;line-height:16px;padding-left:2px;">Edit16</div>
<div class="ed" style="left:1388px;top:692px;width:93px;height:16px;background:#fff;font-size:11px;line-height:16px;padding-left:2px;">Edit25</div>
<div class="a" style="left:1492px;top:629px;width:16px;height:144px;background:repeating-conic-gradient(#e8e8e8 0 25%,#ffffff 0 50%) 0 0/2px 2px"></div>
<div class="btn" style="left:1492px;top:629px;width:14px;height:13px;"><span style="font-size:12px;"><svg width="7" height="4" viewBox="0 0 7 4"><path d="M0 4 L3.5 0 L7 4Z" fill="#000"/></svg></span></div>
<div class="btn" style="left:1492px;top:662px;width:14px;height:14px;"><span style="font-size:12px;"></span></div>
<div class="btn" style="left:1492px;top:757px;width:14px;height:14px;"><span style="font-size:12px;"><svg width="7" height="4" viewBox="0 0 7 4"><path d="M0 0 L3.5 4 L7 0Z" fill="#000"/></svg></span></div>
<div class="a" style="left:1050px;top:724px;width:429px;height:69px;background:#fff;border-style:solid;border-width:2px 1px 1px 2px;border-color:#a0a0a0 #fff #fff #a0a0a0"></div>
<div class="a" style="left:1052px;top:743px;width:429px;height:17px;background:#0078d7;"></div>
<div class="t" style="left:1054.4px;top:727.7px;font-size:15px;line-height:15px;transform:scaleX(0.9674);transform-origin:0 0;">1  20 11 02.575 +/- 0.014s,  S/N= 5.66 D   Main change</div>
<div class="t" style="left:1054.4px;top:744.7px;font-size:15px;line-height:15px;color:#fff;transform:scaleX(0.9674);transform-origin:0 0;">2  20 11 02.872 +/- 0.030s,  S/N= 4.96 R   Main change</div>
<div class="btn" style="left:1074px;top:804px;width:191px;height:23px;"><span style="font-size:12px;"></span></div>
<div class="t" style="left:1088.3px;top:811.02px;font-size:11px;line-height:11px;transform:scaleX(0.9520);transform-origin:0 0;">Miss Disappearance  (approx. time)</div>
<div class="btn" style="left:1274px;top:804px;width:183px;height:23px;"><span style="font-size:12px;"></span></div>
<div class="t" style="left:1282.2px;top:811.02px;font-size:11px;line-height:11px;transform:scaleX(0.9697);transform-origin:0 0;">Miss  Reapppearance [approx. tine]</div>
<div class="ed" style="left:1050px;top:844px;width:107px;height:16px;background:#fff;font-size:12px;line-height:16px;padding-left:2px;"></div>
<div class="btn" style="left:1143px;top:846px;width:14px;height:14px;"><span style="font-size:12px;"><svg width="7" height="4" viewBox="0 0 7 4"><path d="M0 0 L3.5 4 L7 0Z" fill="#000"/></svg></span></div>
<div class="t" style="left:1053.6px;top:848.62px;font-size:11px;line-height:11px;transform:scaleX(0.9510);transform-origin:0 0;">Main light change</div>
<div class="btn" style="left:1170px;top:836px;width:55px;height:32px;"><span style="font-size:12px;"></span></div>
<div class="t" style="left:1177.3px;top:844.7px;font-size:15px;line-height:15px;transform:scaleX(0.9571);transform-origin:0 0;">Delete</div>
<div class="btn" style="left:1232px;top:836px;width:46px;height:32px;"><span style="font-size:12px;"></span></div>
<div class="t" style="left:1244.2px;top:845.18px;font-size:14px;line-height:14px;transform:scaleX(0.9347);transform-origin:0 0;">Sort</div>
<div class="btn" style="left:1292px;top:836px;width:111px;height:32px;border-color:#000 #000 #000 #000;box-shadow:inset -1px -1px 0 #a0a0a0, inset 1px 1px 0 #fff"><span style="font-size:12px;"></span></div>
<div class="a" style="left:1297px;top:841px;width:101px;height:24px;border:1px dotted #000"></div>
<div class="t" style="left:1302.2px;top:844.7px;font-size:15px;line-height:15px;font-weight:bold;transform:scaleX(0.9790);transform-origin:0 0;">Add to report</div>
<div class="btn" style="left:1418px;top:836px;width:88px;height:32px;"><span style="font-size:12px;"></span></div>
<div class="t" style="left:1423.4px;top:845.66px;font-size:13px;line-height:13px;font-weight:bold;transform:scaleX(0.8850);transform-origin:0 0;">Apply &amp; Close</div>
</body></html>
